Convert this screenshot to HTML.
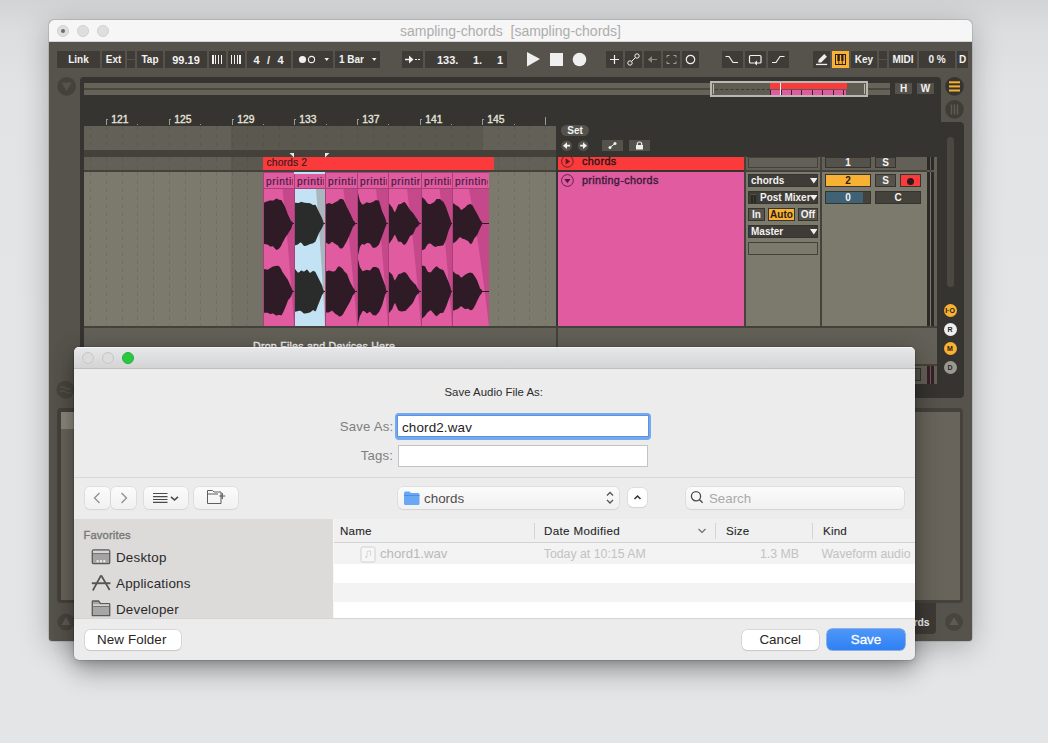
<!DOCTYPE html><html><head><meta charset="utf-8"><style>
*{margin:0;padding:0;box-sizing:border-box}
html,body{width:1048px;height:743px;overflow:hidden}
body{background:linear-gradient(180deg,#d2d3d5 0px,#dcdddf 30px,#e2e3e5 90px,#e4e5e7 400px,#e4e5e7 743px);font-family:"Liberation Sans",sans-serif;position:relative}
.a{position:absolute}
#win{left:49px;top:20px;width:923px;height:621px;border-radius:5px 5px 3px 3px;background:#56534c;box-shadow:0 6px 30px rgba(0,0,0,.26),0 0 0 1px rgba(0,0,0,.10);overflow:hidden}
#tb{left:0;top:0;width:923px;height:22px;background:#f6f6f6;border-bottom:1px solid #d6d6d6}
.tl{width:12px;height:12px;border-radius:50%;background:#dedede;border:1px solid #d0d0d0}
.btn{background:#3f3c37;color:#f2f2f2;font-weight:bold;font-size:10px;text-align:center;line-height:18px;height:17px;top:51px;white-space:nowrap;overflow:hidden}
.sb{background:#3f3c37;color:#f2f2f2;font-weight:bold;font-size:10px;white-space:nowrap;overflow:hidden}
.t{white-space:nowrap}
#dlg{left:74px;top:347px;width:841px;height:313px;background:#ececec;border-radius:5px;box-shadow:0 12px 26px rgba(0,0,0,.30),0 0 24px rgba(0,0,0,.10),0 3px 6px rgba(0,0,0,.10),0 0 0 0.5px rgba(0,0,0,.2);overflow:hidden}
.d{position:absolute;white-space:nowrap;color:#262626;font-size:13px}
</style></head><body>
<div id="win" class="a">
<div id="tb" class="a"><div class="a tl" style="left:8px;top:5px"><div class="a" style="left:3px;top:3px;width:4px;height:4px;border-radius:50%;background:#6b6b6b"></div></div><div class="a tl" style="left:28px;top:5px"></div><div class="a tl" style="left:48px;top:5px"></div><div class="a t" style="left:0;width:923px;top:3px;text-align:center;font-size:14px;color:#adadad">sampling-chords&nbsp; [sampling-chords]</div></div>
<div id="ab" class="a" style="left:-49px;top:-20px;width:1048px;height:743px">
  <!-- toolbar buttons -->
  <div class="a btn" style="left:57px;width:43px">Link</div>
  <div class="a btn" style="left:102px;width:23px">Ext</div>
  <div class="a btn" style="left:127px;width:8px;height:8px"></div>
  <div class="a btn" style="left:127px;width:8px;height:8px;top:60px"></div>
  <div class="a btn" style="left:137px;width:26px">Tap</div>
  <div class="a btn" style="left:165px;width:42px;font-size:11px">99.19</div>
  <div class="a btn" style="left:209px;width:17px"><svg class="a" style="left:0;top:0" width="17" height="17"><rect x="3" y="4" width="2" height="9" fill="#f2f2f2"/><rect x="6" y="4" width="1" height="9" fill="#f2f2f2"/><rect x="9" y="4" width="1" height="9" fill="#f2f2f2"/><rect x="12" y="4" width="1" height="9" fill="#f2f2f2"/></svg></div>
  <div class="a btn" style="left:228px;width:17px"><svg class="a" style="left:0;top:0" width="17" height="17"><rect x="3" y="4" width="1" height="9" fill="#f2f2f2"/><rect x="6" y="4" width="1" height="9" fill="#f2f2f2"/><rect x="9" y="4" width="1" height="9" fill="#f2f2f2"/><rect x="11" y="4" width="2" height="9" fill="#f2f2f2"/></svg></div>
  <div class="a btn" style="left:247px;width:44px;font-size:11px"><span class="a" style="left:6.5px;top:0">4</span><span class="a" style="left:20px;top:0">/</span><span class="a" style="left:30.5px;top:0">4</span></div>
  <div class="a btn" style="left:293px;width:40px"><svg class="a" style="left:0;top:0" width="40" height="17"><circle cx="9.5" cy="8.5" r="3.6" fill="#f0f0f0"/><circle cx="18.5" cy="8.5" r="3.1" fill="none" stroke="#f0f0f0" stroke-width="1.1"/><path d="M31.5 7 L36 7 L33.75 10 Z" fill="#f0f0f0"/></svg></div>
  <div class="a btn" style="left:335px;width:45px;text-align:left;padding-left:4px">1 Bar<svg class="a" style="left:0;top:0" width="45" height="17"><path d="M37 7 L41.5 7 L39.25 10 Z" fill="#f0f0f0"/></svg></div>
  <div class="a btn" style="left:402px;width:21px"><svg class="a" style="left:0;top:0" width="21" height="17"><path d="M3 8.5 H8" stroke="#f0f0f0" stroke-width="1.4"/><path d="M7 4.5 L11.5 8.5 L7 12.5 Z" fill="#f0f0f0"/><rect x="13" y="8" width="2" height="1" fill="#f0f0f0"/><rect x="16" y="8" width="2" height="1" fill="#f0f0f0"/></svg></div>
  <div class="a btn" style="left:425px;width:82px;font-size:11px"><span class="a" style="left:12px;top:0">133.</span><span class="a" style="left:48px;top:0">1.</span><span class="a" style="left:72px;top:0">1</span></div>
  <svg class="a" style="left:520px;top:48px" width="80" height="22"><path d="M7 4 L20 11 L7 18.5 Z" fill="#efefef"/><rect x="30" y="5" width="13" height="13" fill="#efefef"/><circle cx="59.5" cy="11.5" r="6.8" fill="#efefef"/></svg>
  <div class="a btn" style="left:606px;width:17px"><svg class="a" style="left:0;top:0" width="17" height="17"><path d="M8.5 4 V13 M4 8.5 H13" stroke="#f0f0f0" stroke-width="1.2"/></svg></div>
  <div class="a btn" style="left:625px;width:17px"><svg class="a" style="left:0;top:0" width="17" height="17"><circle cx="5" cy="12" r="2.2" fill="none" stroke="#f0f0f0" stroke-width="1"/><circle cx="12" cy="5" r="2.2" fill="none" stroke="#f0f0f0" stroke-width="1"/><path d="M6.5 10.5 L10.5 6.5" stroke="#f0f0f0" stroke-width="1"/></svg></div>
  <div class="a btn" style="left:644px;width:17px"><svg class="a" style="left:0;top:0" width="17" height="17"><path d="M4 8.5 H13" stroke="#8a877c" stroke-width="1.2"/><path d="M8 5 L4 8.5 L8 12 Z" fill="#8a877c"/></svg></div>
  <div class="a btn" style="left:663px;width:17px"><svg class="a" style="left:0;top:0" width="17" height="17"><path d="M4 6.5 V4.5 H6.5 M10.5 4.5 H13 V6.5 M13 10.5 V12.5 H10.5 M6.5 12.5 H4 V10.5" stroke="#a6a396" stroke-width="1" fill="none"/></svg></div>
  <div class="a btn" style="left:682px;width:17px"><svg class="a" style="left:0;top:0" width="17" height="17"><circle cx="8.5" cy="8.5" r="4.2" fill="none" stroke="#f0f0f0" stroke-width="1.2"/></svg></div>
  <div class="a btn" style="left:722px;width:21px"><svg class="a" style="left:0;top:0" width="21" height="17"><path d="M3.5 5.5 H7 L11 11.5 H16" stroke="#f0f0f0" stroke-width="1.2" fill="none"/></svg></div>
  <div class="a btn" style="left:745px;width:21px"><svg class="a" style="left:0;top:0" width="21" height="17"><path d="M9 12 H5.5 Q4.5 12 4.5 11 V5.5 Q4.5 4.5 5.5 4.5 H15 Q16 4.5 16 5.5 V11 Q16 12 15 12 H11" stroke="#f0f0f0" stroke-width="1.2" fill="none"/><path d="M12 9.5 L9 12 L12 14.5 Z" fill="#f0f0f0"/></svg></div>
  <div class="a btn" style="left:768px;width:21px"><svg class="a" style="left:0;top:0" width="21" height="17"><path d="M4 11.5 H8 L12 5.5 H16.5" stroke="#f0f0f0" stroke-width="1.2" fill="none"/></svg></div>
  <div class="a btn" style="left:813px;width:17px"><svg class="a" style="left:0;top:0" width="17" height="17"><path d="M5.2 11.6 L5.6 8.8 L11.3 3.1 L13.9 5.7 L8.2 11.4 Z" fill="#efefef"/><rect x="3" y="12.8" width="11.2" height="1.3" fill="#efefef"/></svg></div>
<div class="a btn" style="left:832px;width:17px;background:#f8b133"><svg class="a" style="left:0;top:0" width="17" height="17"><rect x="3" y="3" width="11" height="11" fill="#2b1d1d"/><rect x="4" y="4" width="1.4" height="7" fill="#f8b133"/><rect x="7.8" y="4" width="1.4" height="7" fill="#f8b133"/><rect x="11.5" y="4" width="1.4" height="7" fill="#f8b133"/><rect x="4" y="10" width="2.4" height="3" fill="#f8b133"/><rect x="7.2" y="10" width="2.6" height="3" fill="#f8b133"/><rect x="10.6" y="10" width="2.4" height="3" fill="#f8b133"/></svg></div>
<div class="a btn" style="left:851px;width:26px">Key</div>
  <div class="a btn" style="left:879px;width:8px;height:8px"></div>
  <div class="a btn" style="left:879px;width:8px;height:8px;top:60px"></div>
  <div class="a btn" style="left:889px;width:28px">MIDI</div>
  <div class="a btn" style="left:919px;width:36px">0 %</div>
  <div class="a btn" style="left:957px;width:11px">D</div>

  <!-- collapsed circle left -->
  <svg class="a" style="left:56px;top:76px" width="22" height="22"><circle cx="10.6" cy="10.4" r="9.3" fill="#45423c"/><path d="M5.5 6.5 H15.7 L10.6 15 Z" fill="#56534c"/></svg>
  <!-- dark panel -->
  <div class="a" style="left:80px;top:77px;width:861px;height:46px;background:#363430;border-radius:4px 4px 0 0"></div>
  <div class="a" style="left:80px;top:122px;width:884px;height:276px;background:#363430;border-radius:0 4px 4px 4px"></div>
  <!-- overview strip -->
  <div class="a" style="left:84px;top:83px;width:806px;height:12px;background:#656258"></div>
  <div class="a" style="left:84px;top:88px;width:806px;height:2px;background:#4a4741"></div>
  <div class="a" style="left:710px;top:81px;width:158px;height:16px;border:2px solid #b9b7b1;background:#5f5c53"></div>
  <div class="a" style="left:715px;top:88.5px;width:55px;height:1px;border-top:1px dashed #3e3b35"></div>
  <div class="a" style="left:770.4px;top:83px;width:77px;height:6px;background:#fa3b3b"></div>
  <div class="a" style="left:770.4px;top:89.5px;width:75.6px;height:5.5px;background:repeating-linear-gradient(90deg,#3a2030 0 1px,#e05ba0 1px 10.5px)"></div>
  <div class="a" style="left:780.4px;top:83px;width:1px;height:12px;background:#f4f4f4"></div>
  <div class="a" style="left:713px;top:84px;width:1px;height:10px;background:#b9b7b1"></div>
  <div class="a" style="left:864px;top:84px;width:1px;height:10px;background:#b9b7b1"></div>
  <div class="a btn" style="left:895px;top:83px;width:17px;height:11px;line-height:11px;background:#55524b">H</div>
  <div class="a btn" style="left:917px;top:83px;width:17px;height:11px;line-height:11px;background:#55524b">W</div>
  <!-- right circles -->
  <svg class="a" style="left:944px;top:76px" width="22" height="44"><circle cx="10.5" cy="10.4" r="9.3" fill="#363430"/><rect x="5" y="5.3" width="11" height="2" fill="#f8b133"/><rect x="5" y="9.4" width="11" height="2" fill="#f8b133"/><rect x="5" y="13.5" width="11" height="2" fill="#f8b133"/><circle cx="10.5" cy="33.4" r="9.3" fill="#403d38"/><rect x="6.8" y="28.5" width="1.4" height="10" fill="#5e5b53"/><rect x="9.8" y="28.5" width="1.4" height="10" fill="#5e5b53"/><rect x="12.8" y="28.5" width="1.4" height="10" fill="#5e5b53"/></svg>
  <!-- ruler -->
  <div id="ruler" class="a" style="left:84px;top:100px;width:472px;height:26px"></div>
  <!-- tracks area -->
  <div class="a" style="left:84px;top:125.5px;width:472px;height:24.5px;background:#636057"></div>
  <div class="a" style="left:84px;top:150px;width:472px;height:7px;background:#44413b"></div>
  <div class="a" style="left:84px;top:157px;width:472px;height:13px;background:#636057"></div>
  <div class="a" style="left:84px;top:170px;width:472px;height:2px;background:#44413b"></div>
  <div class="a" style="left:84px;top:172px;width:472px;height:154px;background:#7c796d"></div>
  <div class="a" style="left:84px;top:326px;width:472px;height:2px;background:#44413b"></div>
  <div class="a" style="left:84px;top:328px;width:472px;height:70px;background:#636057"></div>
  <!-- loop dotted region -->
  <div class="a" style="left:231px;top:125.5px;width:252px;height:24.5px;background:#5b5850"></div>
  <div class="a" style="left:231px;top:157px;width:32px;height:13px;background:#5b5850"></div>
  <div class="a" style="left:231px;top:172px;width:32px;height:154px;background:#747166"></div>
  <div id="grid" class="a" style="left:0;top:0"></div>
  <div class="a" style="left:556px;top:122px;width:2px;height:276px;background:#363430"></div>

<div class="a" style="left:106.0px;top:119px;width:1px;height:6px;background:#9c9990"></div>
<div class="a" style="left:106.0px;top:119px;width:2px;height:1px;background:#9c9990"></div>
<div class="a t" style="left:111.3px;top:114px;font-size:10.3px;color:#e6e4de;-webkit-text-stroke:0.35px #e6e4de;line-height:11px">121</div>
<div class="a" style="left:169.0px;top:119px;width:1px;height:6px;background:#9c9990"></div>
<div class="a" style="left:169.0px;top:119px;width:2px;height:1px;background:#9c9990"></div>
<div class="a t" style="left:174.3px;top:114px;font-size:10.3px;color:#e6e4de;-webkit-text-stroke:0.35px #e6e4de;line-height:11px">125</div>
<div class="a" style="left:232.0px;top:119px;width:1px;height:6px;background:#9c9990"></div>
<div class="a" style="left:232.0px;top:119px;width:2px;height:1px;background:#9c9990"></div>
<div class="a t" style="left:237.3px;top:114px;font-size:10.3px;color:#e6e4de;-webkit-text-stroke:0.35px #e6e4de;line-height:11px">129</div>
<div class="a" style="left:294.0px;top:119px;width:1px;height:6px;background:#9c9990"></div>
<div class="a" style="left:294.0px;top:119px;width:2px;height:1px;background:#9c9990"></div>
<div class="a t" style="left:299.3px;top:114px;font-size:10.3px;color:#e6e4de;-webkit-text-stroke:0.35px #e6e4de;line-height:11px">133</div>
<div class="a" style="left:357.0px;top:119px;width:1px;height:6px;background:#9c9990"></div>
<div class="a" style="left:357.0px;top:119px;width:2px;height:1px;background:#9c9990"></div>
<div class="a t" style="left:362.3px;top:114px;font-size:10.3px;color:#e6e4de;-webkit-text-stroke:0.35px #e6e4de;line-height:11px">137</div>
<div class="a" style="left:420.0px;top:119px;width:1px;height:6px;background:#9c9990"></div>
<div class="a" style="left:420.0px;top:119px;width:2px;height:1px;background:#9c9990"></div>
<div class="a t" style="left:425.3px;top:114px;font-size:10.3px;color:#e6e4de;-webkit-text-stroke:0.35px #e6e4de;line-height:11px">141</div>
<div class="a" style="left:482.0px;top:119px;width:1px;height:6px;background:#9c9990"></div>
<div class="a" style="left:482.0px;top:119px;width:2px;height:1px;background:#9c9990"></div>
<div class="a t" style="left:487.3px;top:114px;font-size:10.3px;color:#e6e4de;-webkit-text-stroke:0.35px #e6e4de;line-height:11px">145</div>
<div class="a" style="left:137.0px;top:123.5px;width:1px;height:1.5px;background:#9c9990"></div>
<div class="a" style="left:200.0px;top:123.5px;width:1px;height:1.5px;background:#9c9990"></div>
<div class="a" style="left:263.0px;top:123.5px;width:1px;height:1.5px;background:#9c9990"></div>
<div class="a" style="left:326.0px;top:123.5px;width:1px;height:1.5px;background:#9c9990"></div>
<div class="a" style="left:388.0px;top:123.5px;width:1px;height:1.5px;background:#9c9990"></div>
<div class="a" style="left:451.0px;top:123.5px;width:1px;height:1.5px;background:#9c9990"></div>
<div class="a" style="left:514.0px;top:123.5px;width:1px;height:1.5px;background:#9c9990"></div>
<div class="a" style="left:545.0px;top:117px;width:1px;height:8px;background:#9c9990"></div>
<div class="a" style="left:90.0px;top:126px;width:1px;height:24px;background:repeating-linear-gradient(180deg,rgba(40,38,34,.13) 0 4px,transparent 4px 8px)"></div>
<div class="a" style="left:90.0px;top:157px;width:1px;height:13px;background:repeating-linear-gradient(180deg,rgba(40,38,34,.13) 0 4px,transparent 4px 8px)"></div>
<div class="a" style="left:90.0px;top:172px;width:1px;height:154px;background:repeating-linear-gradient(180deg,rgba(40,38,34,.13) 0 4px,transparent 4px 8px)"></div>
<div class="a" style="left:90.0px;top:328px;width:1px;height:70px;background:repeating-linear-gradient(180deg,rgba(40,38,34,.13) 0 4px,transparent 4px 8px)"></div>
<div class="a" style="left:106.0px;top:126px;width:1px;height:24px;background:repeating-linear-gradient(180deg,rgba(40,38,34,.13) 0 4px,transparent 4px 8px)"></div>
<div class="a" style="left:106.0px;top:157px;width:1px;height:13px;background:repeating-linear-gradient(180deg,rgba(40,38,34,.13) 0 4px,transparent 4px 8px)"></div>
<div class="a" style="left:106.0px;top:172px;width:1px;height:154px;background:repeating-linear-gradient(180deg,rgba(40,38,34,.13) 0 4px,transparent 4px 8px)"></div>
<div class="a" style="left:106.0px;top:328px;width:1px;height:70px;background:repeating-linear-gradient(180deg,rgba(40,38,34,.13) 0 4px,transparent 4px 8px)"></div>
<div class="a" style="left:122.0px;top:126px;width:1px;height:24px;background:repeating-linear-gradient(180deg,rgba(40,38,34,.13) 0 4px,transparent 4px 8px)"></div>
<div class="a" style="left:122.0px;top:157px;width:1px;height:13px;background:repeating-linear-gradient(180deg,rgba(40,38,34,.13) 0 4px,transparent 4px 8px)"></div>
<div class="a" style="left:122.0px;top:172px;width:1px;height:154px;background:repeating-linear-gradient(180deg,rgba(40,38,34,.13) 0 4px,transparent 4px 8px)"></div>
<div class="a" style="left:122.0px;top:328px;width:1px;height:70px;background:repeating-linear-gradient(180deg,rgba(40,38,34,.13) 0 4px,transparent 4px 8px)"></div>
<div class="a" style="left:137.0px;top:126px;width:1px;height:24px;background:repeating-linear-gradient(180deg,rgba(40,38,34,.13) 0 4px,transparent 4px 8px)"></div>
<div class="a" style="left:137.0px;top:157px;width:1px;height:13px;background:repeating-linear-gradient(180deg,rgba(40,38,34,.13) 0 4px,transparent 4px 8px)"></div>
<div class="a" style="left:137.0px;top:172px;width:1px;height:154px;background:repeating-linear-gradient(180deg,rgba(40,38,34,.13) 0 4px,transparent 4px 8px)"></div>
<div class="a" style="left:137.0px;top:328px;width:1px;height:70px;background:repeating-linear-gradient(180deg,rgba(40,38,34,.13) 0 4px,transparent 4px 8px)"></div>
<div class="a" style="left:153.0px;top:126px;width:1px;height:24px;background:repeating-linear-gradient(180deg,rgba(40,38,34,.13) 0 4px,transparent 4px 8px)"></div>
<div class="a" style="left:153.0px;top:157px;width:1px;height:13px;background:repeating-linear-gradient(180deg,rgba(40,38,34,.13) 0 4px,transparent 4px 8px)"></div>
<div class="a" style="left:153.0px;top:172px;width:1px;height:154px;background:repeating-linear-gradient(180deg,rgba(40,38,34,.13) 0 4px,transparent 4px 8px)"></div>
<div class="a" style="left:153.0px;top:328px;width:1px;height:70px;background:repeating-linear-gradient(180deg,rgba(40,38,34,.13) 0 4px,transparent 4px 8px)"></div>
<div class="a" style="left:169.0px;top:126px;width:1px;height:24px;background:repeating-linear-gradient(180deg,rgba(40,38,34,.13) 0 4px,transparent 4px 8px)"></div>
<div class="a" style="left:169.0px;top:157px;width:1px;height:13px;background:repeating-linear-gradient(180deg,rgba(40,38,34,.13) 0 4px,transparent 4px 8px)"></div>
<div class="a" style="left:169.0px;top:172px;width:1px;height:154px;background:repeating-linear-gradient(180deg,rgba(40,38,34,.13) 0 4px,transparent 4px 8px)"></div>
<div class="a" style="left:169.0px;top:328px;width:1px;height:70px;background:repeating-linear-gradient(180deg,rgba(40,38,34,.13) 0 4px,transparent 4px 8px)"></div>
<div class="a" style="left:185.0px;top:126px;width:1px;height:24px;background:repeating-linear-gradient(180deg,rgba(40,38,34,.13) 0 4px,transparent 4px 8px)"></div>
<div class="a" style="left:185.0px;top:157px;width:1px;height:13px;background:repeating-linear-gradient(180deg,rgba(40,38,34,.13) 0 4px,transparent 4px 8px)"></div>
<div class="a" style="left:185.0px;top:172px;width:1px;height:154px;background:repeating-linear-gradient(180deg,rgba(40,38,34,.13) 0 4px,transparent 4px 8px)"></div>
<div class="a" style="left:185.0px;top:328px;width:1px;height:70px;background:repeating-linear-gradient(180deg,rgba(40,38,34,.13) 0 4px,transparent 4px 8px)"></div>
<div class="a" style="left:200.0px;top:126px;width:1px;height:24px;background:repeating-linear-gradient(180deg,rgba(40,38,34,.13) 0 4px,transparent 4px 8px)"></div>
<div class="a" style="left:200.0px;top:157px;width:1px;height:13px;background:repeating-linear-gradient(180deg,rgba(40,38,34,.13) 0 4px,transparent 4px 8px)"></div>
<div class="a" style="left:200.0px;top:172px;width:1px;height:154px;background:repeating-linear-gradient(180deg,rgba(40,38,34,.13) 0 4px,transparent 4px 8px)"></div>
<div class="a" style="left:200.0px;top:328px;width:1px;height:70px;background:repeating-linear-gradient(180deg,rgba(40,38,34,.13) 0 4px,transparent 4px 8px)"></div>
<div class="a" style="left:216.0px;top:126px;width:1px;height:24px;background:repeating-linear-gradient(180deg,rgba(40,38,34,.13) 0 4px,transparent 4px 8px)"></div>
<div class="a" style="left:216.0px;top:157px;width:1px;height:13px;background:repeating-linear-gradient(180deg,rgba(40,38,34,.13) 0 4px,transparent 4px 8px)"></div>
<div class="a" style="left:216.0px;top:172px;width:1px;height:154px;background:repeating-linear-gradient(180deg,rgba(40,38,34,.13) 0 4px,transparent 4px 8px)"></div>
<div class="a" style="left:216.0px;top:328px;width:1px;height:70px;background:repeating-linear-gradient(180deg,rgba(40,38,34,.13) 0 4px,transparent 4px 8px)"></div>
<div class="a" style="left:232.0px;top:126px;width:1px;height:24px;background:repeating-linear-gradient(180deg,rgba(40,38,34,.13) 0 4px,transparent 4px 8px)"></div>
<div class="a" style="left:232.0px;top:157px;width:1px;height:13px;background:repeating-linear-gradient(180deg,rgba(40,38,34,.13) 0 4px,transparent 4px 8px)"></div>
<div class="a" style="left:232.0px;top:172px;width:1px;height:154px;background:repeating-linear-gradient(180deg,rgba(40,38,34,.13) 0 4px,transparent 4px 8px)"></div>
<div class="a" style="left:232.0px;top:328px;width:1px;height:70px;background:repeating-linear-gradient(180deg,rgba(40,38,34,.13) 0 4px,transparent 4px 8px)"></div>
<div class="a" style="left:247.0px;top:126px;width:1px;height:24px;background:repeating-linear-gradient(180deg,rgba(40,38,34,.13) 0 4px,transparent 4px 8px)"></div>
<div class="a" style="left:247.0px;top:157px;width:1px;height:13px;background:repeating-linear-gradient(180deg,rgba(40,38,34,.13) 0 4px,transparent 4px 8px)"></div>
<div class="a" style="left:247.0px;top:172px;width:1px;height:154px;background:repeating-linear-gradient(180deg,rgba(40,38,34,.13) 0 4px,transparent 4px 8px)"></div>
<div class="a" style="left:247.0px;top:328px;width:1px;height:70px;background:repeating-linear-gradient(180deg,rgba(40,38,34,.13) 0 4px,transparent 4px 8px)"></div>
<div class="a" style="left:263.0px;top:126px;width:1px;height:24px;background:repeating-linear-gradient(180deg,rgba(40,38,34,.13) 0 4px,transparent 4px 8px)"></div>
<div class="a" style="left:263.0px;top:157px;width:1px;height:13px;background:repeating-linear-gradient(180deg,rgba(40,38,34,.13) 0 4px,transparent 4px 8px)"></div>
<div class="a" style="left:263.0px;top:172px;width:1px;height:154px;background:repeating-linear-gradient(180deg,rgba(40,38,34,.13) 0 4px,transparent 4px 8px)"></div>
<div class="a" style="left:263.0px;top:328px;width:1px;height:70px;background:repeating-linear-gradient(180deg,rgba(40,38,34,.13) 0 4px,transparent 4px 8px)"></div>
<div class="a" style="left:279.0px;top:126px;width:1px;height:24px;background:repeating-linear-gradient(180deg,rgba(40,38,34,.13) 0 4px,transparent 4px 8px)"></div>
<div class="a" style="left:279.0px;top:157px;width:1px;height:13px;background:repeating-linear-gradient(180deg,rgba(40,38,34,.13) 0 4px,transparent 4px 8px)"></div>
<div class="a" style="left:279.0px;top:172px;width:1px;height:154px;background:repeating-linear-gradient(180deg,rgba(40,38,34,.13) 0 4px,transparent 4px 8px)"></div>
<div class="a" style="left:279.0px;top:328px;width:1px;height:70px;background:repeating-linear-gradient(180deg,rgba(40,38,34,.13) 0 4px,transparent 4px 8px)"></div>
<div class="a" style="left:294.0px;top:126px;width:1px;height:24px;background:repeating-linear-gradient(180deg,rgba(40,38,34,.13) 0 4px,transparent 4px 8px)"></div>
<div class="a" style="left:294.0px;top:157px;width:1px;height:13px;background:repeating-linear-gradient(180deg,rgba(40,38,34,.13) 0 4px,transparent 4px 8px)"></div>
<div class="a" style="left:294.0px;top:172px;width:1px;height:154px;background:repeating-linear-gradient(180deg,rgba(40,38,34,.13) 0 4px,transparent 4px 8px)"></div>
<div class="a" style="left:294.0px;top:328px;width:1px;height:70px;background:repeating-linear-gradient(180deg,rgba(40,38,34,.13) 0 4px,transparent 4px 8px)"></div>
<div class="a" style="left:310.0px;top:126px;width:1px;height:24px;background:repeating-linear-gradient(180deg,rgba(40,38,34,.13) 0 4px,transparent 4px 8px)"></div>
<div class="a" style="left:310.0px;top:157px;width:1px;height:13px;background:repeating-linear-gradient(180deg,rgba(40,38,34,.13) 0 4px,transparent 4px 8px)"></div>
<div class="a" style="left:310.0px;top:172px;width:1px;height:154px;background:repeating-linear-gradient(180deg,rgba(40,38,34,.13) 0 4px,transparent 4px 8px)"></div>
<div class="a" style="left:310.0px;top:328px;width:1px;height:70px;background:repeating-linear-gradient(180deg,rgba(40,38,34,.13) 0 4px,transparent 4px 8px)"></div>
<div class="a" style="left:326.0px;top:126px;width:1px;height:24px;background:repeating-linear-gradient(180deg,rgba(40,38,34,.13) 0 4px,transparent 4px 8px)"></div>
<div class="a" style="left:326.0px;top:157px;width:1px;height:13px;background:repeating-linear-gradient(180deg,rgba(40,38,34,.13) 0 4px,transparent 4px 8px)"></div>
<div class="a" style="left:326.0px;top:172px;width:1px;height:154px;background:repeating-linear-gradient(180deg,rgba(40,38,34,.13) 0 4px,transparent 4px 8px)"></div>
<div class="a" style="left:326.0px;top:328px;width:1px;height:70px;background:repeating-linear-gradient(180deg,rgba(40,38,34,.13) 0 4px,transparent 4px 8px)"></div>
<div class="a" style="left:341.0px;top:126px;width:1px;height:24px;background:repeating-linear-gradient(180deg,rgba(40,38,34,.13) 0 4px,transparent 4px 8px)"></div>
<div class="a" style="left:341.0px;top:157px;width:1px;height:13px;background:repeating-linear-gradient(180deg,rgba(40,38,34,.13) 0 4px,transparent 4px 8px)"></div>
<div class="a" style="left:341.0px;top:172px;width:1px;height:154px;background:repeating-linear-gradient(180deg,rgba(40,38,34,.13) 0 4px,transparent 4px 8px)"></div>
<div class="a" style="left:341.0px;top:328px;width:1px;height:70px;background:repeating-linear-gradient(180deg,rgba(40,38,34,.13) 0 4px,transparent 4px 8px)"></div>
<div class="a" style="left:357.0px;top:126px;width:1px;height:24px;background:repeating-linear-gradient(180deg,rgba(40,38,34,.13) 0 4px,transparent 4px 8px)"></div>
<div class="a" style="left:357.0px;top:157px;width:1px;height:13px;background:repeating-linear-gradient(180deg,rgba(40,38,34,.13) 0 4px,transparent 4px 8px)"></div>
<div class="a" style="left:357.0px;top:172px;width:1px;height:154px;background:repeating-linear-gradient(180deg,rgba(40,38,34,.13) 0 4px,transparent 4px 8px)"></div>
<div class="a" style="left:357.0px;top:328px;width:1px;height:70px;background:repeating-linear-gradient(180deg,rgba(40,38,34,.13) 0 4px,transparent 4px 8px)"></div>
<div class="a" style="left:373.0px;top:126px;width:1px;height:24px;background:repeating-linear-gradient(180deg,rgba(40,38,34,.13) 0 4px,transparent 4px 8px)"></div>
<div class="a" style="left:373.0px;top:157px;width:1px;height:13px;background:repeating-linear-gradient(180deg,rgba(40,38,34,.13) 0 4px,transparent 4px 8px)"></div>
<div class="a" style="left:373.0px;top:172px;width:1px;height:154px;background:repeating-linear-gradient(180deg,rgba(40,38,34,.13) 0 4px,transparent 4px 8px)"></div>
<div class="a" style="left:373.0px;top:328px;width:1px;height:70px;background:repeating-linear-gradient(180deg,rgba(40,38,34,.13) 0 4px,transparent 4px 8px)"></div>
<div class="a" style="left:388.0px;top:126px;width:1px;height:24px;background:repeating-linear-gradient(180deg,rgba(40,38,34,.13) 0 4px,transparent 4px 8px)"></div>
<div class="a" style="left:388.0px;top:157px;width:1px;height:13px;background:repeating-linear-gradient(180deg,rgba(40,38,34,.13) 0 4px,transparent 4px 8px)"></div>
<div class="a" style="left:388.0px;top:172px;width:1px;height:154px;background:repeating-linear-gradient(180deg,rgba(40,38,34,.13) 0 4px,transparent 4px 8px)"></div>
<div class="a" style="left:388.0px;top:328px;width:1px;height:70px;background:repeating-linear-gradient(180deg,rgba(40,38,34,.13) 0 4px,transparent 4px 8px)"></div>
<div class="a" style="left:404.0px;top:126px;width:1px;height:24px;background:repeating-linear-gradient(180deg,rgba(40,38,34,.13) 0 4px,transparent 4px 8px)"></div>
<div class="a" style="left:404.0px;top:157px;width:1px;height:13px;background:repeating-linear-gradient(180deg,rgba(40,38,34,.13) 0 4px,transparent 4px 8px)"></div>
<div class="a" style="left:404.0px;top:172px;width:1px;height:154px;background:repeating-linear-gradient(180deg,rgba(40,38,34,.13) 0 4px,transparent 4px 8px)"></div>
<div class="a" style="left:404.0px;top:328px;width:1px;height:70px;background:repeating-linear-gradient(180deg,rgba(40,38,34,.13) 0 4px,transparent 4px 8px)"></div>
<div class="a" style="left:420.0px;top:126px;width:1px;height:24px;background:repeating-linear-gradient(180deg,rgba(40,38,34,.13) 0 4px,transparent 4px 8px)"></div>
<div class="a" style="left:420.0px;top:157px;width:1px;height:13px;background:repeating-linear-gradient(180deg,rgba(40,38,34,.13) 0 4px,transparent 4px 8px)"></div>
<div class="a" style="left:420.0px;top:172px;width:1px;height:154px;background:repeating-linear-gradient(180deg,rgba(40,38,34,.13) 0 4px,transparent 4px 8px)"></div>
<div class="a" style="left:420.0px;top:328px;width:1px;height:70px;background:repeating-linear-gradient(180deg,rgba(40,38,34,.13) 0 4px,transparent 4px 8px)"></div>
<div class="a" style="left:435.0px;top:126px;width:1px;height:24px;background:repeating-linear-gradient(180deg,rgba(40,38,34,.13) 0 4px,transparent 4px 8px)"></div>
<div class="a" style="left:435.0px;top:157px;width:1px;height:13px;background:repeating-linear-gradient(180deg,rgba(40,38,34,.13) 0 4px,transparent 4px 8px)"></div>
<div class="a" style="left:435.0px;top:172px;width:1px;height:154px;background:repeating-linear-gradient(180deg,rgba(40,38,34,.13) 0 4px,transparent 4px 8px)"></div>
<div class="a" style="left:435.0px;top:328px;width:1px;height:70px;background:repeating-linear-gradient(180deg,rgba(40,38,34,.13) 0 4px,transparent 4px 8px)"></div>
<div class="a" style="left:451.0px;top:126px;width:1px;height:24px;background:repeating-linear-gradient(180deg,rgba(40,38,34,.13) 0 4px,transparent 4px 8px)"></div>
<div class="a" style="left:451.0px;top:157px;width:1px;height:13px;background:repeating-linear-gradient(180deg,rgba(40,38,34,.13) 0 4px,transparent 4px 8px)"></div>
<div class="a" style="left:451.0px;top:172px;width:1px;height:154px;background:repeating-linear-gradient(180deg,rgba(40,38,34,.13) 0 4px,transparent 4px 8px)"></div>
<div class="a" style="left:451.0px;top:328px;width:1px;height:70px;background:repeating-linear-gradient(180deg,rgba(40,38,34,.13) 0 4px,transparent 4px 8px)"></div>
<div class="a" style="left:467.0px;top:126px;width:1px;height:24px;background:repeating-linear-gradient(180deg,rgba(40,38,34,.13) 0 4px,transparent 4px 8px)"></div>
<div class="a" style="left:467.0px;top:157px;width:1px;height:13px;background:repeating-linear-gradient(180deg,rgba(40,38,34,.13) 0 4px,transparent 4px 8px)"></div>
<div class="a" style="left:467.0px;top:172px;width:1px;height:154px;background:repeating-linear-gradient(180deg,rgba(40,38,34,.13) 0 4px,transparent 4px 8px)"></div>
<div class="a" style="left:467.0px;top:328px;width:1px;height:70px;background:repeating-linear-gradient(180deg,rgba(40,38,34,.13) 0 4px,transparent 4px 8px)"></div>
<div class="a" style="left:482.0px;top:126px;width:1px;height:24px;background:repeating-linear-gradient(180deg,rgba(40,38,34,.13) 0 4px,transparent 4px 8px)"></div>
<div class="a" style="left:482.0px;top:157px;width:1px;height:13px;background:repeating-linear-gradient(180deg,rgba(40,38,34,.13) 0 4px,transparent 4px 8px)"></div>
<div class="a" style="left:482.0px;top:172px;width:1px;height:154px;background:repeating-linear-gradient(180deg,rgba(40,38,34,.13) 0 4px,transparent 4px 8px)"></div>
<div class="a" style="left:482.0px;top:328px;width:1px;height:70px;background:repeating-linear-gradient(180deg,rgba(40,38,34,.13) 0 4px,transparent 4px 8px)"></div>
<div class="a" style="left:498.0px;top:126px;width:1px;height:24px;background:repeating-linear-gradient(180deg,rgba(40,38,34,.13) 0 4px,transparent 4px 8px)"></div>
<div class="a" style="left:498.0px;top:157px;width:1px;height:13px;background:repeating-linear-gradient(180deg,rgba(40,38,34,.13) 0 4px,transparent 4px 8px)"></div>
<div class="a" style="left:498.0px;top:172px;width:1px;height:154px;background:repeating-linear-gradient(180deg,rgba(40,38,34,.13) 0 4px,transparent 4px 8px)"></div>
<div class="a" style="left:498.0px;top:328px;width:1px;height:70px;background:repeating-linear-gradient(180deg,rgba(40,38,34,.13) 0 4px,transparent 4px 8px)"></div>
<div class="a" style="left:514.0px;top:126px;width:1px;height:24px;background:repeating-linear-gradient(180deg,rgba(40,38,34,.13) 0 4px,transparent 4px 8px)"></div>
<div class="a" style="left:514.0px;top:157px;width:1px;height:13px;background:repeating-linear-gradient(180deg,rgba(40,38,34,.13) 0 4px,transparent 4px 8px)"></div>
<div class="a" style="left:514.0px;top:172px;width:1px;height:154px;background:repeating-linear-gradient(180deg,rgba(40,38,34,.13) 0 4px,transparent 4px 8px)"></div>
<div class="a" style="left:514.0px;top:328px;width:1px;height:70px;background:repeating-linear-gradient(180deg,rgba(40,38,34,.13) 0 4px,transparent 4px 8px)"></div>
<div class="a" style="left:529.0px;top:126px;width:1px;height:24px;background:repeating-linear-gradient(180deg,rgba(40,38,34,.13) 0 4px,transparent 4px 8px)"></div>
<div class="a" style="left:529.0px;top:157px;width:1px;height:13px;background:repeating-linear-gradient(180deg,rgba(40,38,34,.13) 0 4px,transparent 4px 8px)"></div>
<div class="a" style="left:529.0px;top:172px;width:1px;height:154px;background:repeating-linear-gradient(180deg,rgba(40,38,34,.13) 0 4px,transparent 4px 8px)"></div>
<div class="a" style="left:529.0px;top:328px;width:1px;height:70px;background:repeating-linear-gradient(180deg,rgba(40,38,34,.13) 0 4px,transparent 4px 8px)"></div>
<div class="a" style="left:545.0px;top:126px;width:1px;height:24px;background:repeating-linear-gradient(180deg,rgba(40,38,34,.13) 0 4px,transparent 4px 8px)"></div>
<div class="a" style="left:545.0px;top:157px;width:1px;height:13px;background:repeating-linear-gradient(180deg,rgba(40,38,34,.13) 0 4px,transparent 4px 8px)"></div>
<div class="a" style="left:545.0px;top:172px;width:1px;height:154px;background:repeating-linear-gradient(180deg,rgba(40,38,34,.13) 0 4px,transparent 4px 8px)"></div>
<div class="a" style="left:545.0px;top:328px;width:1px;height:70px;background:repeating-linear-gradient(180deg,rgba(40,38,34,.13) 0 4px,transparent 4px 8px)"></div>
<div class="a" style="left:263px;top:157px;width:231px;height:13px;background:#fb3b3b"></div>
<div class="a t" style="left:266.5px;top:157px;font-size:10.4px;line-height:12px;color:#3a1a22;-webkit-text-stroke:0.15px #3a1a22;letter-spacing:0.1px">chords 2</div>
<svg class="a" style="left:289px;top:152.5px" width="6" height="6"><path d="M0.5 0 H5 V4.5 Z" fill="#dcecf4"/></svg>
<svg class="a" style="left:325px;top:152.5px" width="6" height="6"><path d="M0 0 H4.5 L0 4.5 Z" fill="#dcecf4"/></svg>
<div class="a" style="left:263px;top:172px;width:31px;height:154px;background:#e05ba0;border-left:1px solid #a8407a;"></div>
<div class="a" style="left:263px;top:172px;width:31px;height:17px;background:#e05ba0;border:1px solid #a8407a;border-right:none"></div>
<div class="a t" style="left:266px;top:175px;width:27px;overflow:hidden;font-size:10.1px;line-height:13px;color:#40203f;-webkit-text-stroke:0.2px #40203f;letter-spacing:0.65px">printing-chords</div>
<svg class="a" style="left:263px;top:189px" width="31" height="137"><path d="M19.5 0 Q25.825 60 31 137 V0 Z" fill="#c4488a"/></svg>
<div class="a" style="left:294px;top:172px;width:31px;height:154px;background:#c3e2f3;border-left:1px solid #a8407a;"></div>
<div class="a" style="left:294px;top:172px;width:31px;height:17px;background:#e05ba0;border:1px solid #a8407a;border-right:none"></div>
<div class="a" style="left:294px;top:172px;width:31px;height:1.5px;background:#c3e2f3"></div>
<div class="a t" style="left:297px;top:175px;width:27px;overflow:hidden;font-size:10.1px;line-height:13px;color:#40203f;-webkit-text-stroke:0.2px #40203f;letter-spacing:0.65px">printing-chords</div>
<svg class="a" style="left:294px;top:189px" width="31" height="137"><path d="M22 0 Q26.95 60 31 137 V0 Z" fill="#a9b6be"/></svg>
<div class="a" style="left:325px;top:172px;width:32px;height:154px;background:#e05ba0;border-left:1px solid #a8407a;"></div>
<div class="a" style="left:325px;top:172px;width:32px;height:17px;background:#e05ba0;border:1px solid #a8407a;border-right:none"></div>
<div class="a t" style="left:328px;top:175px;width:28px;overflow:hidden;font-size:10.1px;line-height:13px;color:#40203f;-webkit-text-stroke:0.2px #40203f;letter-spacing:0.65px">printing-chords</div>
<svg class="a" style="left:325px;top:189px" width="32" height="137"><path d="M18.4 0 Q25.88 60 32 137 V0 Z" fill="#c4488a"/></svg>
<div class="a" style="left:357px;top:172px;width:31px;height:154px;background:#e05ba0;border-left:1px solid #a8407a;"></div>
<div class="a" style="left:357px;top:172px;width:31px;height:17px;background:#e05ba0;border:1px solid #a8407a;border-right:none"></div>
<div class="a t" style="left:360px;top:175px;width:27px;overflow:hidden;font-size:10.1px;line-height:13px;color:#40203f;-webkit-text-stroke:0.2px #40203f;letter-spacing:0.65px">printing-chords</div>
<svg class="a" style="left:357px;top:189px" width="31" height="137"><path d="M19 0 Q25.6 60 31 137 V0 Z" fill="#c4488a"/></svg>
<div class="a" style="left:388px;top:172px;width:33px;height:154px;background:#e05ba0;border-left:1px solid #a8407a;"></div>
<div class="a" style="left:388px;top:172px;width:33px;height:17px;background:#e05ba0;border:1px solid #a8407a;border-right:none"></div>
<div class="a t" style="left:391px;top:175px;width:29px;overflow:hidden;font-size:10.1px;line-height:13px;color:#40203f;-webkit-text-stroke:0.2px #40203f;letter-spacing:0.65px">printing-chords</div>
<svg class="a" style="left:388px;top:189px" width="33" height="137"><path d="M19 0 Q26.7 60 33 137 V0 Z" fill="#c4488a"/></svg>
<div class="a" style="left:421px;top:172px;width:31px;height:154px;background:#e05ba0;border-left:1px solid #a8407a;"></div>
<div class="a" style="left:421px;top:172px;width:31px;height:17px;background:#e05ba0;border:1px solid #a8407a;border-right:none"></div>
<div class="a t" style="left:424px;top:175px;width:27px;overflow:hidden;font-size:10.1px;line-height:13px;color:#40203f;-webkit-text-stroke:0.2px #40203f;letter-spacing:0.65px">printing-chords</div>
<svg class="a" style="left:421px;top:189px" width="31" height="137"><path d="M18.6 0 Q25.42 60 31 137 V0 Z" fill="#c4488a"/></svg>
<div class="a" style="left:452px;top:172px;width:37px;height:154px;background:#e05ba0;border-left:1px solid #a8407a;"></div>
<div class="a" style="left:452px;top:172px;width:37px;height:17px;background:#e05ba0;border:1px solid #a8407a;border-right:none"></div>
<div class="a t" style="left:455px;top:175px;width:33px;overflow:hidden;font-size:10.1px;line-height:13px;color:#40203f;-webkit-text-stroke:0.2px #40203f;letter-spacing:0.65px">printing-chords</div>
<svg class="a" style="left:452px;top:189px" width="37" height="137"><path d="M17 0 Q28.0 60 37 137 V0 Z" fill="#c4488a"/></svg>
<svg class="a" style="left:264px;top:189px" width="30" height="137"><path d="M0.0 13.7 L0.5 13.4 L1.0 13.2 L1.5 12.9 L2.0 12.7 L2.5 12.5 L3.0 12.2 L3.5 12.4 L4.0 12.3 L4.5 12.1 L5.0 11.8 L5.5 11.6 L6.0 11.4 L6.5 11.4 L7.0 11.5 L7.5 11.5 L8.0 11.5 L8.5 11.6 L9.0 11.7 L9.5 11.4 L10.0 11.0 L10.5 10.7 L11.0 10.4 L11.5 10.1 L12.0 9.7 L12.5 9.6 L13.0 9.7 L13.5 10.0 L14.0 10.2 L14.5 10.4 L15.0 10.7 L15.5 10.8 L16.0 10.9 L16.5 11.0 L17.0 11.1 L17.5 11.3 L18.0 12.2 L18.5 13.1 L19.0 14.0 L19.5 14.9 L20.0 15.8 L20.5 16.7 L21.0 17.7 L21.5 19.0 L22.0 20.4 L22.5 21.7 L23.0 23.1 L23.5 24.4 L24.0 25.8 L24.5 26.8 L25.0 27.8 L25.5 28.8 L26.0 29.8 L26.5 30.9 L27.0 31.9 L27.5 32.4 L28.0 32.3 L28.5 33.3 L29.0 34.3 L29.5 34.5 L30.0 34.5 L30.0 34.5 L29.5 34.5 L29.0 34.7 L28.5 35.7 L28.0 36.7 L27.5 38.8 L27.0 40.0 L26.5 40.8 L26.0 41.6 L25.5 42.3 L25.0 43.1 L24.5 43.9 L24.0 44.7 L23.5 45.4 L23.0 46.1 L22.5 46.8 L22.0 47.5 L21.5 48.2 L21.0 48.9 L20.5 49.9 L20.0 50.9 L19.5 51.9 L19.0 52.8 L18.5 53.8 L18.0 54.8 L17.5 56.3 L17.0 57.1 L16.5 57.8 L16.0 58.4 L15.5 59.1 L15.0 59.8 L14.5 60.0 L14.0 60.2 L13.5 60.5 L13.0 60.7 L12.5 60.9 L12.0 60.7 L11.5 60.1 L11.0 59.5 L10.5 59.0 L10.0 58.4 L9.5 57.8 L9.0 57.2 L8.5 57.3 L8.0 57.4 L7.5 57.4 L7.0 57.4 L6.5 57.4 L6.0 57.4 L5.5 57.0 L5.0 56.6 L4.5 56.2 L4.0 55.8 L3.5 55.5 L3.0 55.5 L2.5 55.4 L2.0 55.3 L1.5 55.2 L1.0 55.1 L0.5 55.0 L0.0 54.9 Z" fill="#2e1b25"/><path d="M0.0 80.1 L0.5 80.2 L1.0 80.3 L1.5 80.3 L2.0 80.4 L2.5 80.5 L3.0 80.6 L3.5 80.7 L4.0 80.5 L4.5 80.2 L5.0 79.9 L5.5 79.6 L6.0 79.3 L6.5 79.0 L7.0 78.7 L7.5 78.3 L8.0 78.0 L8.5 77.8 L9.0 77.5 L9.5 77.4 L10.0 77.3 L10.5 77.2 L11.0 77.1 L11.5 77.1 L12.0 77.0 L12.5 76.7 L13.0 76.7 L13.5 76.8 L14.0 76.9 L14.5 77.0 L15.0 77.1 L15.5 77.8 L16.0 78.5 L16.5 79.2 L17.0 79.9 L17.5 80.7 L18.0 82.2 L18.5 82.9 L19.0 83.7 L19.5 84.4 L20.0 85.2 L20.5 85.9 L21.0 86.7 L21.5 87.4 L22.0 88.1 L22.5 88.9 L23.0 89.6 L23.5 90.3 L24.0 91.1 L24.5 92.2 L25.0 93.3 L25.5 94.5 L26.0 95.6 L26.5 96.8 L27.0 97.9 L27.5 98.7 L28.0 100.3 L28.5 101.3 L29.0 102.3 L29.5 102.5 L30.0 102.5 L30.0 102.5 L29.5 102.5 L29.0 102.7 L28.5 103.7 L28.0 104.7 L27.5 106.2 L27.0 107.6 L26.5 108.2 L26.0 108.9 L25.5 109.5 L25.0 110.2 L24.5 110.8 L24.0 111.4 L23.5 112.7 L23.0 114.0 L22.5 115.4 L22.0 116.7 L21.5 118.0 L21.0 119.3 L20.5 120.3 L20.0 121.4 L19.5 122.5 L19.0 123.5 L18.5 124.6 L18.0 125.7 L17.5 126.3 L17.0 126.3 L16.5 126.2 L16.0 126.1 L15.5 125.9 L15.0 125.8 L14.5 126.0 L14.0 126.1 L13.5 126.3 L13.0 126.5 L12.5 126.6 L12.0 126.4 L11.5 126.1 L11.0 125.7 L10.5 125.4 L10.0 125.1 L9.5 124.8 L9.0 124.5 L8.5 124.6 L8.0 124.7 L7.5 124.8 L7.0 124.9 L6.5 124.9 L6.0 125.0 L5.5 124.7 L5.0 124.4 L4.5 124.1 L4.0 123.9 L3.5 123.7 L3.0 123.8 L2.5 123.8 L2.0 123.8 L1.5 123.7 L1.0 123.7 L0.5 123.7 L0.0 123.7 Z" fill="#2e1b25"/><rect x="0" y="34" width="30" height="1" fill="#2e1b25"/><rect x="0" y="102" width="30" height="1" fill="#2e1b25"/></svg>
<svg class="a" style="left:295px;top:189px" width="30" height="137"><path d="M0.0 13.7 L0.5 13.7 L1.0 13.8 L1.5 13.8 L2.0 13.9 L2.5 13.9 L3.0 14.0 L3.5 13.9 L4.0 13.8 L4.5 13.7 L5.0 13.4 L5.5 13.1 L6.0 12.8 L6.5 12.9 L7.0 13.1 L7.5 13.2 L8.0 13.3 L8.5 13.5 L9.0 13.6 L9.5 13.7 L10.0 13.7 L10.5 13.8 L11.0 13.9 L11.5 13.9 L12.0 14.0 L12.5 14.0 L13.0 14.1 L13.5 14.1 L14.0 14.1 L14.5 14.2 L15.0 14.2 L15.5 14.5 L16.0 14.8 L16.5 15.1 L17.0 15.4 L17.5 15.8 L18.0 16.1 L18.5 16.0 L19.0 15.9 L19.5 15.8 L20.0 15.7 L20.5 15.9 L21.0 16.8 L21.5 17.8 L22.0 18.8 L22.5 19.9 L23.0 20.9 L23.5 21.9 L24.0 22.9 L24.5 24.0 L25.0 25.0 L25.5 26.0 L26.0 27.0 L26.5 28.0 L27.0 29.0 L27.5 30.4 L28.0 32.1 L28.5 33.2 L29.0 34.3 L29.5 34.5 L30.0 34.5 L30.0 34.5 L29.5 34.5 L29.0 34.7 L28.5 35.8 L28.0 36.9 L27.5 37.8 L27.0 39.2 L26.5 40.0 L26.0 40.8 L25.5 41.6 L25.0 42.4 L24.5 43.3 L24.0 44.1 L23.5 45.3 L23.0 46.4 L22.5 47.6 L22.0 48.8 L21.5 49.9 L21.0 51.1 L20.5 52.4 L20.0 53.0 L19.5 53.3 L19.0 53.6 L18.5 54.0 L18.0 54.3 L17.5 54.4 L17.0 54.5 L16.5 54.7 L16.0 54.8 L15.5 54.9 L15.0 55.0 L14.5 55.2 L14.0 55.5 L13.5 55.7 L13.0 56.0 L12.5 56.2 L12.0 56.5 L11.5 56.6 L11.0 56.7 L10.5 56.8 L10.0 56.9 L9.5 57.0 L9.0 57.0 L8.5 56.4 L8.0 55.8 L7.5 55.2 L7.0 54.6 L6.5 54.0 L6.0 53.4 L5.5 53.6 L5.0 53.8 L4.5 54.1 L4.0 54.5 L3.5 55.0 L3.0 55.5 L2.5 55.6 L2.0 55.8 L1.5 56.0 L1.0 56.1 L0.5 56.3 L0.0 56.5 Z" fill="#2a2c2c"/><path d="M0.0 80.0 L0.5 80.6 L1.0 81.3 L1.5 81.9 L2.0 82.5 L2.5 83.1 L3.0 83.7 L3.5 83.5 L4.0 83.2 L4.5 82.9 L5.0 82.4 L5.5 81.9 L6.0 81.4 L6.5 81.6 L7.0 81.8 L7.5 82.0 L8.0 82.2 L8.5 82.4 L9.0 82.6 L9.5 82.2 L10.0 81.9 L10.5 81.5 L11.0 81.2 L11.5 80.8 L12.0 80.4 L12.5 81.0 L13.0 81.6 L13.5 82.2 L14.0 82.8 L14.5 83.4 L15.0 84.0 L15.5 83.7 L16.0 83.3 L16.5 82.9 L17.0 82.6 L17.5 82.2 L18.0 81.8 L18.5 82.0 L19.0 82.2 L19.5 82.4 L20.0 82.6 L20.5 83.0 L21.0 84.2 L21.5 85.2 L22.0 86.2 L22.5 87.2 L23.0 88.2 L23.5 89.2 L24.0 90.2 L24.5 91.2 L25.0 92.3 L25.5 93.3 L26.0 94.3 L26.5 95.3 L27.0 96.3 L27.5 97.8 L28.0 100.1 L28.5 101.2 L29.0 102.3 L29.5 102.5 L30.0 102.5 L30.0 102.5 L29.5 102.5 L29.0 102.7 L28.5 103.8 L28.0 104.9 L27.5 105.3 L27.0 106.2 L26.5 107.5 L26.0 108.7 L25.5 110.0 L25.0 111.2 L24.5 112.4 L24.0 113.7 L23.5 115.0 L23.0 116.3 L22.5 117.6 L22.0 118.9 L21.5 120.2 L21.0 121.5 L20.5 122.3 L20.0 122.2 L19.5 121.9 L19.0 121.6 L18.5 121.3 L18.0 121.1 L17.5 121.5 L17.0 121.9 L16.5 122.3 L16.0 122.7 L15.5 123.1 L15.0 123.5 L14.5 123.6 L14.0 123.7 L13.5 123.8 L13.0 123.9 L12.5 124.1 L12.0 124.2 L11.5 124.3 L11.0 124.3 L10.5 124.4 L10.0 124.5 L9.5 124.6 L9.0 124.6 L8.5 124.2 L8.0 123.8 L7.5 123.3 L7.0 122.9 L6.5 122.4 L6.0 122.0 L5.5 121.9 L5.0 121.8 L4.5 121.7 L4.0 121.8 L3.5 121.9 L3.0 122.1 L2.5 122.2 L2.0 122.3 L1.5 122.4 L1.0 122.6 L0.5 122.7 L0.0 122.8 Z" fill="#2a2c2c"/><rect x="0" y="34" width="30" height="1" fill="#2a2c2c"/><rect x="0" y="102" width="30" height="1" fill="#2a2c2c"/></svg>
<svg class="a" style="left:326px;top:189px" width="31" height="137"><path d="M0.0 15.1 L0.5 14.9 L1.0 14.8 L1.5 14.6 L2.0 14.4 L2.5 14.3 L3.0 14.1 L3.5 14.3 L4.0 14.4 L4.5 14.6 L5.0 14.7 L5.5 14.9 L6.0 15.0 L6.5 14.9 L7.0 14.6 L7.5 14.3 L8.0 14.0 L8.5 13.7 L9.0 13.4 L9.5 13.1 L10.0 12.9 L10.5 12.6 L11.0 12.4 L11.5 12.1 L12.0 11.9 L12.5 11.2 L13.0 10.5 L13.5 10.3 L14.0 10.2 L14.5 10.0 L15.0 9.9 L15.5 10.0 L16.0 10.1 L16.5 10.3 L17.0 10.4 L17.5 10.8 L18.0 11.7 L18.5 12.8 L19.0 13.9 L19.5 15.1 L20.0 16.2 L20.5 17.3 L21.0 18.4 L21.5 19.3 L22.0 20.3 L22.5 21.3 L23.0 22.2 L23.5 23.2 L24.0 24.1 L24.5 25.2 L25.0 26.3 L25.5 27.4 L26.0 28.5 L26.5 29.6 L27.0 30.7 L27.5 31.8 L28.0 31.7 L28.5 32.7 L29.0 33.6 L29.5 34.5 L30.0 34.5 L30.5 34.5 L31.0 34.5 L31.0 34.5 L30.5 34.5 L30.0 34.5 L29.5 34.5 L29.0 35.4 L28.5 36.3 L28.0 37.3 L27.5 36.9 L27.0 37.7 L26.5 38.9 L26.0 40.2 L25.5 41.5 L25.0 42.7 L24.5 44.0 L24.0 45.2 L23.5 46.3 L23.0 47.4 L22.5 48.5 L22.0 49.6 L21.5 50.7 L21.0 51.8 L20.5 52.7 L20.0 53.5 L19.5 54.4 L19.0 55.3 L18.5 56.2 L18.0 57.0 L17.5 58.1 L17.0 58.6 L16.5 58.9 L16.0 59.2 L15.5 59.5 L15.0 59.8 L14.5 59.4 L14.0 59.1 L13.5 58.7 L13.0 58.3 L12.5 57.4 L12.0 56.5 L11.5 56.3 L11.0 56.0 L10.5 55.7 L10.0 55.4 L9.5 55.1 L9.0 54.8 L8.5 54.4 L8.0 54.0 L7.5 53.7 L7.0 53.3 L6.5 52.9 L6.0 52.7 L5.5 53.1 L5.0 53.5 L4.5 54.0 L4.0 54.4 L3.5 54.8 L3.0 55.2 L2.5 54.9 L2.0 54.7 L1.5 54.4 L1.0 54.2 L0.5 53.9 L0.0 53.6 Z" fill="#2e1b25"/><path d="M0.0 82.4 L0.5 82.2 L1.0 82.0 L1.5 81.9 L2.0 81.7 L2.5 81.5 L3.0 81.4 L3.5 81.5 L4.0 81.7 L4.5 81.9 L5.0 82.0 L5.5 82.2 L6.0 82.4 L6.5 82.5 L7.0 82.5 L7.5 82.4 L8.0 82.3 L8.5 82.3 L9.0 82.2 L9.5 81.5 L10.0 80.8 L10.5 80.0 L11.0 79.3 L11.5 78.5 L12.0 77.8 L12.5 77.5 L13.0 77.3 L13.5 77.5 L14.0 77.8 L14.5 78.1 L15.0 78.4 L15.5 78.8 L16.0 79.3 L16.5 79.8 L17.0 80.2 L17.5 80.9 L18.0 82.2 L18.5 82.6 L19.0 83.1 L19.5 83.6 L20.0 84.0 L20.5 84.5 L21.0 85.0 L21.5 86.3 L22.0 87.6 L22.5 88.9 L23.0 90.3 L23.5 91.6 L24.0 92.9 L24.5 93.8 L25.0 94.8 L25.5 95.7 L26.0 96.6 L26.5 97.5 L27.0 98.5 L27.5 99.3 L28.0 99.7 L28.5 100.7 L29.0 101.6 L29.5 102.5 L30.0 102.5 L30.5 102.5 L31.0 102.5 L31.0 102.5 L30.5 102.5 L30.0 102.5 L29.5 102.5 L29.0 103.4 L28.5 104.3 L28.0 105.3 L27.5 105.4 L27.0 105.9 L26.5 107.0 L26.0 108.2 L25.5 109.3 L25.0 110.5 L24.5 111.6 L24.0 112.8 L23.5 113.7 L23.0 114.6 L22.5 115.4 L22.0 116.3 L21.5 117.2 L21.0 118.1 L20.5 119.0 L20.0 119.8 L19.5 120.7 L19.0 121.5 L18.5 122.4 L18.0 123.3 L17.5 124.6 L17.0 125.3 L16.5 125.8 L16.0 126.3 L15.5 126.8 L15.0 127.2 L14.5 127.3 L14.0 127.3 L13.5 127.4 L13.0 127.4 L12.5 126.9 L12.0 126.4 L11.5 126.1 L11.0 125.8 L10.5 125.5 L10.0 125.2 L9.5 124.9 L9.0 124.6 L8.5 124.1 L8.0 123.5 L7.5 123.0 L7.0 122.5 L6.5 121.9 L6.0 121.6 L5.5 121.9 L5.0 122.2 L4.5 122.5 L4.0 122.8 L3.5 123.0 L3.0 123.3 L2.5 123.4 L2.0 123.4 L1.5 123.5 L1.0 123.5 L0.5 123.6 L0.0 123.6 Z" fill="#2e1b25"/><rect x="0" y="34" width="31" height="1" fill="#2e1b25"/><rect x="0" y="102" width="31" height="1" fill="#2e1b25"/></svg>
<svg class="a" style="left:358px;top:189px" width="30" height="137"><path d="M0.0 4.1 L0.5 6.2 L1.0 8.4 L1.5 10.6 L2.0 12.2 L2.5 13.0 L3.0 13.7 L3.5 14.4 L4.0 15.1 L4.5 15.8 L5.0 15.5 L5.5 15.2 L6.0 15.0 L6.5 14.7 L7.0 14.4 L7.5 14.1 L8.0 13.8 L8.5 13.6 L9.0 13.3 L9.5 13.5 L10.0 13.6 L10.5 13.8 L11.0 13.9 L11.5 13.9 L12.0 14.0 L12.5 13.8 L13.0 13.6 L13.5 13.4 L14.0 13.2 L14.5 13.0 L15.0 12.8 L15.5 12.5 L16.0 12.2 L16.5 11.9 L17.0 11.6 L17.5 11.3 L18.0 11.1 L18.5 11.2 L19.0 11.3 L19.5 11.4 L20.0 11.5 L20.5 11.6 L21.0 11.7 L21.5 13.4 L22.0 15.1 L22.5 16.9 L23.0 18.6 L23.5 20.4 L24.0 22.1 L24.5 23.2 L25.0 24.3 L25.5 25.4 L26.0 26.5 L26.5 27.6 L27.0 28.7 L27.5 30.1 L28.0 32.2 L28.5 33.7 L29.0 34.5 L29.5 34.5 L30.0 34.5 L30.0 34.5 L29.5 34.5 L29.0 34.5 L28.5 35.3 L28.0 36.8 L27.5 38.0 L27.0 39.1 L26.5 40.5 L26.0 41.9 L25.5 43.3 L25.0 44.7 L24.5 46.1 L24.0 47.5 L23.5 48.8 L23.0 50.2 L22.5 51.5 L22.0 52.9 L21.5 54.2 L21.0 55.5 L20.5 56.0 L20.0 56.5 L19.5 57.0 L19.0 57.5 L18.5 58.0 L18.0 58.5 L17.5 58.6 L17.0 58.6 L16.5 58.7 L16.0 58.8 L15.5 58.8 L15.0 58.9 L14.5 58.2 L14.0 57.5 L13.5 56.8 L13.0 56.0 L12.5 55.3 L12.0 54.6 L11.5 54.4 L11.0 54.3 L10.5 54.1 L10.0 54.0 L9.5 53.9 L9.0 53.8 L8.5 54.2 L8.0 54.5 L7.5 54.9 L7.0 55.2 L6.5 55.6 L6.0 56.0 L5.5 55.5 L5.0 55.1 L4.5 54.7 L4.0 55.2 L3.5 55.7 L3.0 56.2 L2.5 57.1 L2.0 57.9 L1.5 59.6 L1.0 61.9 L0.5 64.1 L0.0 66.3 Z" fill="#2e1b25"/><path d="M0.0 70.3 L0.5 72.5 L1.0 74.6 L1.5 76.7 L2.0 78.2 L2.5 79.0 L3.0 79.7 L3.5 80.5 L4.0 81.4 L4.5 82.2 L5.0 82.1 L5.5 82.0 L6.0 81.8 L6.5 81.6 L7.0 81.5 L7.5 81.3 L8.0 81.1 L8.5 80.9 L9.0 80.7 L9.5 80.9 L10.0 81.1 L10.5 81.3 L11.0 81.3 L11.5 81.4 L12.0 81.5 L12.5 80.9 L13.0 80.4 L13.5 79.8 L14.0 79.2 L14.5 78.6 L15.0 78.0 L15.5 78.0 L16.0 78.0 L16.5 78.0 L17.0 78.0 L17.5 78.0 L18.0 78.0 L18.5 78.3 L19.0 78.6 L19.5 78.8 L20.0 79.1 L20.5 79.4 L21.0 79.7 L21.5 81.1 L22.0 82.5 L22.5 83.9 L23.0 85.3 L23.5 86.7 L24.0 88.1 L24.5 89.5 L25.0 90.8 L25.5 92.1 L26.0 93.4 L26.5 94.7 L27.0 96.0 L27.5 97.8 L28.0 100.2 L28.5 101.7 L29.0 102.5 L29.5 102.5 L30.0 102.5 L30.0 102.5 L29.5 102.5 L29.0 102.5 L28.5 103.3 L28.0 104.8 L27.5 104.8 L27.0 106.1 L26.5 107.9 L26.0 109.6 L25.5 111.4 L25.0 113.1 L24.5 114.9 L24.0 116.6 L23.5 117.7 L23.0 118.7 L22.5 119.8 L22.0 120.9 L21.5 121.9 L21.0 123.0 L20.5 123.6 L20.0 124.1 L19.5 124.7 L19.0 125.3 L18.5 125.8 L18.0 126.4 L17.5 126.4 L17.0 126.3 L16.5 126.3 L16.0 126.3 L15.5 126.2 L15.0 126.2 L14.5 125.6 L14.0 125.0 L13.5 124.4 L13.0 123.8 L12.5 123.2 L12.0 122.6 L11.5 122.9 L11.0 123.2 L10.5 123.4 L10.0 123.8 L9.5 124.2 L9.0 124.6 L8.5 124.1 L8.0 123.7 L7.5 123.3 L7.0 122.8 L6.5 122.4 L6.0 121.9 L5.5 122.0 L5.0 122.1 L4.5 122.2 L4.0 123.2 L3.5 124.3 L3.0 125.3 L2.5 126.0 L2.0 126.8 L1.5 128.4 L1.0 130.5 L0.5 132.6 L0.0 134.8 Z" fill="#2e1b25"/><rect x="0" y="34" width="30" height="1" fill="#2e1b25"/><rect x="0" y="102" width="30" height="1" fill="#2e1b25"/></svg>
<svg class="a" style="left:389px;top:189px" width="32" height="137"><path d="M0.0 14.4 L0.5 15.0 L1.0 15.6 L1.5 16.3 L2.0 16.9 L2.5 17.5 L3.0 18.1 L3.5 19.0 L4.0 20.0 L4.5 21.0 L5.0 22.0 L5.5 23.0 L6.0 23.2 L6.5 22.0 L7.0 20.8 L7.5 19.7 L8.0 18.5 L8.5 17.3 L9.0 16.1 L9.5 15.5 L10.0 15.3 L10.5 15.2 L11.0 15.1 L11.5 15.0 L12.0 14.9 L12.5 14.6 L13.0 14.3 L13.5 13.9 L14.0 13.6 L14.5 13.2 L15.0 12.9 L15.5 13.3 L16.0 13.6 L16.5 14.0 L17.0 14.7 L17.5 15.5 L18.0 16.2 L18.5 17.0 L19.0 17.8 L19.5 18.6 L20.0 19.4 L20.5 20.1 L21.0 20.9 L21.5 21.4 L22.0 21.9 L22.5 22.5 L23.0 23.0 L23.5 23.5 L24.0 24.0 L24.5 24.8 L25.0 25.5 L25.5 26.3 L26.0 27.1 L26.5 27.9 L27.0 28.6 L27.5 29.2 L28.0 29.8 L28.5 30.4 L29.0 31.7 L29.5 32.4 L30.0 33.1 L30.5 33.8 L31.0 34.4 L31.5 34.5 L32.0 34.5 L32.0 34.5 L31.5 34.5 L31.0 34.6 L30.5 35.2 L30.0 35.9 L29.5 36.6 L29.0 37.3 L28.5 37.9 L28.0 38.1 L27.5 38.4 L27.0 38.6 L26.5 39.7 L26.0 40.8 L25.5 41.9 L25.0 43.0 L24.5 44.1 L24.0 45.2 L23.5 45.5 L23.0 45.8 L22.5 46.1 L22.0 46.4 L21.5 46.7 L21.0 47.0 L20.5 48.0 L20.0 49.0 L19.5 50.0 L19.0 51.0 L18.5 52.0 L18.0 53.0 L17.5 53.7 L17.0 54.4 L16.5 55.0 L16.0 55.4 L15.5 55.7 L15.0 56.0 L14.5 55.4 L14.0 54.9 L13.5 54.4 L13.0 53.8 L12.5 53.3 L12.0 52.8 L11.5 52.8 L11.0 52.8 L10.5 52.8 L10.0 52.8 L9.5 52.8 L9.0 52.3 L8.5 51.2 L8.0 50.1 L7.5 49.0 L7.0 47.9 L6.5 46.8 L6.0 45.8 L5.5 45.9 L5.0 46.9 L4.5 47.8 L4.0 48.8 L3.5 49.8 L3.0 50.6 L2.5 51.3 L2.0 52.0 L1.5 52.7 L1.0 53.4 L0.5 54.1 L0.0 54.8 Z" fill="#2e1b25"/><path d="M0.0 82.7 L0.5 83.2 L1.0 83.6 L1.5 84.0 L2.0 84.5 L2.5 84.9 L3.0 85.3 L3.5 86.3 L4.0 87.5 L4.5 88.7 L5.0 89.9 L5.5 91.1 L6.0 91.5 L6.5 90.5 L7.0 89.6 L7.5 88.7 L8.0 87.8 L8.5 86.9 L9.0 86.0 L9.5 85.3 L10.0 85.1 L10.5 84.9 L11.0 84.8 L11.5 84.7 L12.0 84.5 L12.5 84.3 L13.0 84.1 L13.5 83.8 L14.0 83.6 L14.5 83.3 L15.0 83.1 L15.5 83.2 L16.0 83.4 L16.5 83.5 L17.0 84.0 L17.5 84.5 L18.0 85.1 L18.5 85.9 L19.0 86.6 L19.5 87.4 L20.0 88.2 L20.5 89.0 L21.0 89.8 L21.5 90.4 L22.0 91.0 L22.5 91.6 L23.0 92.1 L23.5 92.7 L24.0 93.3 L24.5 93.8 L25.0 94.3 L25.5 94.7 L26.0 95.2 L26.5 95.6 L27.0 96.1 L27.5 97.2 L28.0 98.3 L28.5 99.3 L29.0 99.7 L29.5 100.4 L30.0 101.1 L30.5 101.8 L31.0 102.4 L31.5 102.5 L32.0 102.5 L32.0 102.5 L31.5 102.5 L31.0 102.6 L30.5 103.2 L30.0 103.9 L29.5 104.6 L29.0 105.3 L28.5 105.1 L28.0 105.8 L27.5 106.4 L27.0 107.1 L26.5 108.2 L26.0 109.3 L25.5 110.3 L25.0 111.4 L24.5 112.5 L24.0 113.6 L23.5 114.2 L23.0 114.8 L22.5 115.4 L22.0 115.9 L21.5 116.5 L21.0 117.1 L20.5 117.6 L20.0 118.2 L19.5 118.7 L19.0 119.2 L18.5 119.8 L18.0 120.3 L17.5 120.8 L17.0 121.4 L16.5 121.8 L16.0 121.9 L15.5 122.0 L15.0 122.1 L14.5 122.2 L14.0 122.3 L13.5 122.3 L13.0 122.4 L12.5 122.5 L12.0 122.5 L11.5 122.3 L11.0 122.1 L10.5 121.9 L10.0 121.7 L9.5 121.4 L9.0 120.7 L8.5 119.6 L8.0 118.4 L7.5 117.3 L7.0 116.2 L6.5 115.1 L6.0 114.0 L5.5 114.4 L5.0 115.6 L4.5 116.9 L4.0 118.1 L3.5 119.4 L3.0 120.5 L2.5 121.1 L2.0 121.6 L1.5 122.2 L1.0 122.8 L0.5 123.4 L0.0 123.9 Z" fill="#2e1b25"/><rect x="0" y="34" width="32" height="1" fill="#2e1b25"/><rect x="0" y="102" width="32" height="1" fill="#2e1b25"/></svg>
<svg class="a" style="left:422px;top:189px" width="30" height="137"><path d="M0.0 8.0 L0.5 8.5 L1.0 8.9 L1.5 9.4 L2.0 9.8 L2.5 10.3 L3.0 10.7 L3.5 11.5 L4.0 12.3 L4.5 13.0 L5.0 13.6 L5.5 14.2 L6.0 14.8 L6.5 14.9 L7.0 15.0 L7.5 15.0 L8.0 15.1 L8.5 15.2 L9.0 14.7 L9.5 14.5 L10.0 14.3 L10.5 14.1 L11.0 13.8 L11.5 13.6 L12.0 13.4 L12.5 12.8 L13.0 12.1 L13.5 11.4 L14.0 10.7 L14.5 10.1 L15.0 10.1 L15.5 10.1 L16.0 10.1 L16.5 10.1 L17.0 10.0 L17.5 10.0 L18.0 10.0 L18.5 10.4 L19.0 10.9 L19.5 11.4 L20.0 11.8 L20.5 12.3 L21.0 12.7 L21.5 13.0 L22.0 14.1 L22.5 15.1 L23.0 16.1 L23.5 17.1 L24.0 18.1 L24.5 19.5 L25.0 20.9 L25.5 22.4 L26.0 23.8 L26.5 25.3 L27.0 26.7 L27.5 28.1 L28.0 29.5 L28.5 30.9 L29.0 32.7 L29.5 34.0 L30.0 34.5 L30.0 34.5 L29.5 35.0 L29.0 36.3 L28.5 37.3 L28.0 38.4 L27.5 39.5 L27.0 40.5 L26.5 42.2 L26.0 43.8 L25.5 45.5 L25.0 47.1 L24.5 48.8 L24.0 50.4 L23.5 51.6 L23.0 52.7 L22.5 53.8 L22.0 55.0 L21.5 56.1 L21.0 56.5 L20.5 56.6 L20.0 56.6 L19.5 56.7 L19.0 56.8 L18.5 56.8 L18.0 56.9 L17.5 56.9 L17.0 57.0 L16.5 57.0 L16.0 57.1 L15.5 57.1 L15.0 57.2 L14.5 57.8 L14.0 57.9 L13.5 57.8 L13.0 57.7 L12.5 57.6 L12.0 57.5 L11.5 57.1 L11.0 56.6 L10.5 56.2 L10.0 55.8 L9.5 55.3 L9.0 54.9 L8.5 54.4 L8.0 54.5 L7.5 54.6 L7.0 54.7 L6.5 54.8 L6.0 54.9 L5.5 55.7 L5.0 56.4 L4.5 57.1 L4.0 58.0 L3.5 59.0 L3.0 59.9 L2.5 60.1 L2.0 60.4 L1.5 60.6 L1.0 60.9 L0.5 61.1 L0.0 61.4 Z" fill="#2e1b25"/><path d="M0.0 76.5 L0.5 76.6 L1.0 76.8 L1.5 76.9 L2.0 77.0 L2.5 77.2 L3.0 77.3 L3.5 78.3 L4.0 79.3 L4.5 80.3 L5.0 81.2 L5.5 82.0 L6.0 82.9 L6.5 83.0 L7.0 83.1 L7.5 83.2 L8.0 83.3 L8.5 83.4 L9.0 82.9 L9.5 82.4 L10.0 81.8 L10.5 81.2 L11.0 80.6 L11.5 80.1 L12.0 79.5 L12.5 79.0 L13.0 78.6 L13.5 78.1 L14.0 77.6 L14.5 77.3 L15.0 77.5 L15.5 77.9 L16.0 78.3 L16.5 78.8 L17.0 79.2 L17.5 79.6 L18.0 80.0 L18.5 80.1 L19.0 80.3 L19.5 80.4 L20.0 80.6 L20.5 80.7 L21.0 80.9 L21.5 81.3 L22.0 82.4 L22.5 83.5 L23.0 84.6 L23.5 85.7 L24.0 86.9 L24.5 88.0 L25.0 89.2 L25.5 90.4 L26.0 91.6 L26.5 92.8 L27.0 93.9 L27.5 95.4 L28.0 96.9 L28.5 98.4 L29.0 100.7 L29.5 102.0 L30.0 102.5 L30.0 102.5 L29.5 103.0 L29.0 104.3 L28.5 106.3 L28.0 107.5 L27.5 108.6 L27.0 109.8 L26.5 111.2 L26.0 112.6 L25.5 113.9 L25.0 115.3 L24.5 116.7 L24.0 118.1 L23.5 119.1 L23.0 120.2 L22.5 121.3 L22.0 122.3 L21.5 123.4 L21.0 123.7 L20.5 123.8 L20.0 123.9 L19.5 124.0 L19.0 124.0 L18.5 124.1 L18.0 124.2 L17.5 124.7 L17.0 125.2 L16.5 125.6 L16.0 126.1 L15.5 126.6 L15.0 127.1 L14.5 127.3 L14.0 126.9 L13.5 126.4 L13.0 125.9 L12.5 125.4 L12.0 124.8 L11.5 124.3 L11.0 123.7 L10.5 123.1 L10.0 122.6 L9.5 122.0 L9.0 121.4 L8.5 121.2 L8.0 121.6 L7.5 121.9 L7.0 122.3 L6.5 122.7 L6.0 123.0 L5.5 123.6 L5.0 124.2 L4.5 124.7 L4.0 125.5 L3.5 126.2 L3.0 127.0 L2.5 127.4 L2.0 127.8 L1.5 128.2 L1.0 128.7 L0.5 129.1 L0.0 129.5 Z" fill="#2e1b25"/><rect x="0" y="34" width="30" height="1" fill="#2e1b25"/><rect x="0" y="102" width="30" height="1" fill="#2e1b25"/></svg>
<svg class="a" style="left:453px;top:189px" width="36" height="137"><path d="M0.0 14.0 L0.5 14.4 L1.0 14.8 L1.5 15.1 L2.0 15.5 L2.5 15.9 L3.0 16.2 L3.5 16.5 L4.0 16.8 L4.5 17.1 L5.0 17.4 L5.5 17.8 L6.0 18.1 L6.5 18.8 L7.0 19.6 L7.5 20.3 L8.0 20.9 L8.5 20.8 L9.0 20.7 L9.5 20.3 L10.0 20.0 L10.5 19.6 L11.0 19.2 L11.5 18.9 L12.0 18.5 L12.5 17.9 L13.0 17.5 L13.5 17.0 L14.0 16.6 L14.5 16.1 L15.0 15.7 L15.5 15.6 L16.0 15.4 L16.5 15.3 L17.0 15.1 L17.5 15.0 L18.0 15.3 L18.5 15.7 L19.0 16.1 L19.5 16.5 L20.0 17.2 L20.5 18.2 L21.0 19.2 L21.5 20.1 L22.0 21.0 L22.5 21.9 L23.0 22.8 L23.5 23.7 L24.0 24.6 L24.5 25.5 L25.0 26.5 L25.5 27.5 L26.0 28.4 L26.5 29.4 L27.0 30.4 L27.5 31.4 L28.0 31.7 L28.5 32.6 L29.0 33.5 L29.5 34.5 L30.0 34.5 L30.5 34.5 L31.0 34.5 L31.5 34.5 L32.0 34.5 L32.5 34.5 L33.0 34.5 L33.5 34.5 L34.0 34.5 L34.5 34.5 L35.0 34.5 L35.5 34.5 L36.0 34.5 L36.0 34.5 L35.5 34.5 L35.0 34.5 L34.5 34.5 L34.0 34.5 L33.5 34.5 L33.0 34.5 L32.5 34.5 L32.0 34.5 L31.5 34.5 L31.0 34.5 L30.5 34.5 L30.0 34.5 L29.5 34.5 L29.0 35.5 L28.5 36.4 L28.0 37.3 L27.5 38.7 L27.0 39.5 L26.5 40.7 L26.0 41.8 L25.5 42.9 L25.0 44.0 L24.5 45.1 L24.0 46.3 L23.5 46.8 L23.0 47.4 L22.5 48.0 L22.0 48.6 L21.5 49.2 L21.0 49.8 L20.5 51.0 L20.0 52.3 L19.5 53.2 L19.0 53.9 L18.5 54.6 L18.0 55.3 L17.5 55.1 L17.0 54.5 L16.5 53.9 L16.0 53.3 L15.5 52.6 L15.0 52.0 L14.5 51.8 L14.0 51.5 L13.5 51.3 L13.0 51.0 L12.5 50.8 L12.0 50.4 L11.5 50.3 L11.0 50.1 L10.5 50.0 L10.0 49.9 L9.5 49.7 L9.0 49.6 L8.5 48.9 L8.0 48.3 L7.5 48.3 L7.0 48.5 L6.5 48.6 L6.0 48.8 L5.5 49.4 L5.0 50.0 L4.5 50.7 L4.0 51.2 L3.5 51.8 L3.0 52.4 L2.5 52.7 L2.0 53.1 L1.5 53.4 L1.0 53.8 L0.5 54.1 L0.0 54.5 Z" fill="#2e1b25"/><path d="M0.0 82.3 L0.5 82.7 L1.0 83.2 L1.5 83.7 L2.0 84.2 L2.5 84.6 L3.0 85.1 L3.5 85.2 L4.0 85.3 L4.5 85.5 L5.0 85.6 L5.5 85.8 L6.0 86.0 L6.5 86.7 L7.0 87.4 L7.5 88.0 L8.0 88.6 L8.5 88.4 L9.0 88.3 L9.5 87.9 L10.0 87.5 L10.5 87.1 L11.0 86.7 L11.5 86.3 L12.0 85.8 L12.5 85.5 L13.0 85.2 L13.5 84.9 L14.0 84.7 L14.5 84.4 L15.0 84.1 L15.5 84.0 L16.0 83.9 L16.5 83.7 L17.0 83.6 L17.5 83.5 L18.0 83.8 L18.5 84.0 L19.0 84.1 L19.5 84.3 L20.0 84.7 L20.5 85.5 L21.0 86.3 L21.5 87.1 L22.0 87.8 L22.5 88.6 L23.0 89.4 L23.5 90.2 L24.0 91.0 L24.5 92.4 L25.0 93.7 L25.5 95.1 L26.0 96.5 L26.5 97.8 L27.0 99.2 L27.5 99.9 L28.0 99.7 L28.5 100.6 L29.0 101.5 L29.5 102.5 L30.0 102.5 L30.5 102.5 L31.0 102.5 L31.5 102.5 L32.0 102.5 L32.5 102.5 L33.0 102.5 L33.5 102.5 L34.0 102.5 L34.5 102.5 L35.0 102.5 L35.5 102.5 L36.0 102.5 L36.0 102.5 L35.5 102.5 L35.0 102.5 L34.5 102.5 L34.0 102.5 L33.5 102.5 L33.0 102.5 L32.5 102.5 L32.0 102.5 L31.5 102.5 L31.0 102.5 L30.5 102.5 L30.0 102.5 L29.5 102.5 L29.0 103.5 L28.5 104.4 L28.0 105.3 L27.5 105.7 L27.0 106.3 L26.5 107.3 L26.0 108.3 L25.5 109.3 L25.0 110.3 L24.5 111.3 L24.0 112.3 L23.5 113.3 L23.0 114.4 L22.5 115.4 L22.0 116.4 L21.5 117.5 L21.0 118.5 L20.5 119.3 L20.0 120.1 L19.5 120.6 L19.0 120.8 L18.5 121.0 L18.0 121.3 L17.5 121.3 L17.0 121.0 L16.5 120.6 L16.0 120.3 L15.5 119.9 L15.0 119.5 L14.5 119.6 L14.0 119.8 L13.5 119.9 L13.0 120.0 L12.5 120.1 L12.0 120.1 L11.5 119.7 L11.0 119.3 L10.5 119.0 L10.0 118.6 L9.5 118.2 L9.0 117.8 L8.5 117.5 L8.0 117.2 L7.5 117.5 L7.0 118.1 L6.5 118.6 L6.0 119.1 L5.5 119.4 L5.0 119.7 L4.5 119.9 L4.0 120.2 L3.5 120.4 L3.0 120.7 L2.5 120.8 L2.0 121.0 L1.5 121.2 L1.0 121.4 L0.5 121.6 L0.0 121.8 Z" fill="#2e1b25"/><rect x="0" y="34" width="36" height="1" fill="#2e1b25"/><rect x="0" y="102" width="36" height="1" fill="#2e1b25"/></svg>
<div class="a t" style="left:561px;top:125px;width:28px;height:11px;border-radius:6px;background:#55524b;color:#f2f2f2;font-size:10px;font-weight:bold;line-height:11px;text-align:center">Set</div>
<svg class="a" style="left:560px;top:139px" width="30" height="13"><circle cx="6.6" cy="6.7" r="5.3" fill="#55524b"/><circle cx="23.2" cy="6.7" r="5.3" fill="#55524b"/><path d="M5 6.7 H10" stroke="#f4f4f4" stroke-width="1.8"/><path d="M7 3.3 L3 6.7 L7 10.1 Z" fill="#f4f4f4"/><path d="M20.2 6.7 H25" stroke="#f4f4f4" stroke-width="1.8"/><path d="M23 3.3 L27 6.7 L23 10.1 Z" fill="#f4f4f4"/></svg>
<div class="a" style="left:602px;top:140px;width:21px;height:11px;background:#55524b"><svg class="a" style="left:0;top:0" width="21" height="11"><circle cx="8" cy="7.5" r="1.5" fill="#f0f0f0"/><circle cx="13" cy="3.5" r="1.5" fill="#f0f0f0"/><path d="M8 7.5 L13 3.5" stroke="#f0f0f0" stroke-width="1"/></svg></div>
<div class="a" style="left:629px;top:140px;width:21px;height:11px;background:#55524b"><svg class="a" style="left:0;top:0" width="21" height="11"><rect x="7" y="5" width="7" height="4.5" fill="#f0f0f0"/><path d="M8.3 5.2 V4 Q8.3 2 10.5 2 Q12.7 2 12.7 4 V5.2" stroke="#f0f0f0" stroke-width="1.1" fill="none"/></svg></div>
<div class="a" style="left:558px;top:157px;width:186px;height:13px;background:#fb3b3b"></div>
<svg class="a" style="left:560px;top:154px" width="16" height="16"><circle cx="7.4" cy="7.4" r="5.8" fill="none" stroke="#6a1f2c" stroke-width="1"/><path d="M5.6 4.2 L10.2 7.4 L5.6 10.6 Z" fill="#5a1c2a"/></svg>
<div class="a t" style="left:582px;top:155px;font-size:10.8px;line-height:12px;color:#2a161a;-webkit-text-stroke:0.35px #2a161a;letter-spacing:0.35px">chords</div>
<div class="a" style="left:558px;top:172px;width:186px;height:154px;background:#e05ba0"></div>
<svg class="a" style="left:560px;top:173px" width="16" height="16"><circle cx="7.4" cy="7.5" r="5.9" fill="none" stroke="#6a2050" stroke-width="1"/><path d="M4.3 5.9 L10.5 5.9 L7.4 10.2 Z" fill="#501a40"/></svg>
<div class="a t" style="left:582px;top:173.5px;font-size:10.8px;line-height:12px;color:#381c38;-webkit-text-stroke:0.35px #381c38;letter-spacing:0.35px">printing-chords</div>
<div class="a" style="left:744px;top:156px;width:2px;height:242px;background:#45423c"></div>
<div class="a" style="left:746px;top:157px;width:74px;height:13px;background:#636057"></div>
<div class="a" style="left:748px;top:157px;width:70px;height:11px;border:1px solid #44413b;background:#636057"></div>
<div class="a" style="left:746px;top:170px;width:74px;height:2px;background:#45423c"></div>
<div class="a" style="left:746px;top:172px;width:74px;height:154px;background:#7c796d"></div>
<div class="a sb" style="left:748px;top:174px;width:70px;height:12.5px;line-height:12.5px;padding-left:2px;border:1px solid #36342f">chords<svg class="a" style="left:61px;top:3px" width="8" height="6"><path d="M0 0 H7.6 L3.8 5.5 Z" fill="#f0f0f0"/></svg></div>
<div class="a sb" style="left:748px;top:191px;width:70px;height:12.5px;line-height:12.5px;padding-left:2px;border:1px solid #36342f"><span class="a" style="left:1.5px;top:1.5px;width:2.2px;height:9.5px;background:#2a2825;border-top:1px solid #5a574f"></span><span class="a" style="left:5px;top:1.5px;width:2.2px;height:9.5px;background:#2a2825;border-top:1px solid #5a574f"></span><span style="margin-left:9px">Post Mixer</span><svg class="a" style="left:61px;top:3px" width="8" height="6"><path d="M0 0 H7.6 L3.8 5.5 Z" fill="#f0f0f0"/></svg></div>
<div class="a sb" style="left:748px;top:208px;width:17px;height:13px;line-height:12px;text-align:center;border:1px solid #36342f;background:#56534c">In</div>
<div class="a sb" style="left:768px;top:208px;width:27px;height:13px;line-height:12px;text-align:center;border:1px solid #36342f;background:#f8b133;color:#2a1a12">Auto</div>
<div class="a sb" style="left:798px;top:208px;width:20px;height:13px;line-height:12px;text-align:center;border:1px solid #36342f;background:#56534c">Off</div>
<div class="a sb" style="left:748px;top:225px;width:70px;height:12.5px;line-height:12.5px;padding-left:2px;border:1px solid #36342f">Master<svg class="a" style="left:61px;top:3px" width="8" height="6"><path d="M0 0 H7.6 L3.8 5.5 Z" fill="#f0f0f0"/></svg></div>
<div class="a" style="left:748px;top:242px;width:70px;height:13px;border:1px solid #44413b"></div>
<div class="a" style="left:820px;top:156px;width:2px;height:242px;background:#45423c"></div>
<div class="a" style="left:822px;top:157px;width:115px;height:13px;background:#636057"></div>
<div class="a" style="left:822px;top:170px;width:115px;height:2px;background:#45423c"></div>
<div class="a" style="left:822px;top:172px;width:115px;height:154px;background:#7c796d"></div>
<div class="a sb" style="left:825px;top:157px;width:46px;height:11px;line-height:10px;text-align:center;border:1px solid #36342f;background:#55524b;color:#f2f2f2">1</div>
<div class="a sb" style="left:875px;top:157px;width:21px;height:11px;line-height:10px;text-align:center;border:1px solid #36342f;background:#55524b;color:#f2f2f2">S</div>
<div class="a sb" style="left:825px;top:174px;width:46px;height:13px;line-height:12px;text-align:center;border:1px solid #36342f;background:#f8b133;color:#2a1a12">2</div>
<div class="a sb" style="left:875px;top:174px;width:21px;height:13px;line-height:12px;text-align:center;border:1px solid #36342f;background:#56534c;color:#f2f2f2">S</div>
<div class="a" style="left:900px;top:174px;width:21px;height:13px;border:1px solid #36342f;background:#fb3b3b"><div class="a" style="left:6px;top:2.5px;width:7px;height:7px;border-radius:50%;background:#2a1a1a"></div></div>
<div class="a" style="left:825px;top:191px;width:46px;height:13px;border:1px solid #36342f;background:#45423c"><div class="a" style="left:0;top:0;width:37px;height:11px;background:#3f6375"></div><div class="a sb" style="left:0;top:0;width:44px;height:11px;line-height:11px;text-align:center;background:transparent">0</div></div>
<div class="a sb" style="left:875px;top:191px;width:46px;height:13px;line-height:12px;text-align:center;border:1px solid #36342f;background:#45423c;color:#f2f2f2">C</div>
<div class="a" style="left:927px;top:157px;width:3px;height:169px;background:#2c2a27"></div>
<div class="a" style="left:927px;top:170px;width:3px;height:2px;background:#5a574f"></div>
<div class="a" style="left:931px;top:157px;width:3px;height:169px;background:#2c2a27"></div>
<div class="a" style="left:931px;top:170px;width:3px;height:2px;background:#5a574f"></div>
<div class="a" style="left:934px;top:157px;width:3px;height:169px;background:#636057"></div>
<div class="a" style="left:947px;top:137px;width:7px;height:150px;border-radius:4px;background:#4b4842"></div>
<div class="a t" style="left:943.5px;top:303.5px;width:13px;height:13px;border-radius:50%;background:#f8b133;color:#2a1a12;font-size:7px;font-weight:bold;line-height:13px;text-align:center">I·O</div>
<div class="a t" style="left:943.5px;top:322.5px;width:13px;height:13px;border-radius:50%;background:#eeeeee;color:#2a2a2a;font-size:7px;font-weight:bold;line-height:13px;text-align:center">R</div>
<div class="a t" style="left:943.5px;top:341.5px;width:13px;height:13px;border-radius:50%;background:#f8b133;color:#2a1a12;font-size:7px;font-weight:bold;line-height:13px;text-align:center">M</div>
<div class="a t" style="left:943.5px;top:360.5px;width:13px;height:13px;border-radius:50%;background:#9a9891;color:#2a2a2a;font-size:7px;font-weight:bold;line-height:13px;text-align:center">D</div>
<div class="a" style="left:84px;top:328px;width:853px;height:36px;background:#636057"></div>
<div class="a" style="left:556px;top:326px;width:2px;height:72px;background:#45423c"></div>
<div class="a" style="left:84px;top:326px;width:853px;height:2px;background:#45423c"></div>
<div class="a" style="left:84px;top:364px;width:853px;height:2px;background:#45423c"></div>
<div class="a" style="left:84px;top:366px;width:853px;height:18px;background:#636057"></div>
<div class="a" style="left:908px;top:368px;width:13px;height:13px;border:1px solid #36342f;background:#55524b"></div>
<div class="a" style="left:927px;top:366px;width:3px;height:18px;background:#3a1f28"></div>
<div class="a" style="left:931px;top:366px;width:3px;height:18px;background:#3a1f28"></div>
<div class="t a" style="left:253px;top:340px;font-size:10.6px;color:#f2f2f2;-webkit-text-stroke:0.35px #f2f2f2;letter-spacing:0.25px;line-height:12px">Drop Files and Devices Here</div>
<div class="a" style="left:57px;top:408px;width:906px;height:195px;border-radius:4px;background:#45423c"></div>
<div class="a" style="left:61px;top:412px;width:899px;height:188px;background:#68645b"></div>
<div class="a" style="left:61px;top:412px;width:20px;height:17px;background:#8a877c"></div>
<svg class="a" style="left:56px;top:380px" width="20" height="20"><circle cx="9.5" cy="9.7" r="9" fill="#48453f"/><path d="M4 8 Q6.5 5.5 9.5 8 T15 8 M4 12 Q6.5 9.5 9.5 12 T15 12" stroke="#57544c" stroke-width="1.3" fill="none"/></svg>
<div class="a" style="left:880px;top:603px;width:56px;height:31px;border-radius:0 0 4px 4px;background:#3e3b36"></div>
<div class="a t" style="left:895px;top:617px;font-size:10.4px;font-weight:bold;color:#eee;line-height:12px">chords</div>
<svg class="a" style="left:944px;top:612px" width="20" height="20"><circle cx="10" cy="10" r="9" fill="#48453f"/><path d="M10 5 L14.5 13 H5.5 Z" fill="#5e5b53"/></svg>
<svg class="a" style="left:56px;top:612px" width="20" height="20"><circle cx="10" cy="10" r="8.6" fill="#48453f"/><path d="M10 5 L14.5 13 H5.5 Z" fill="#5e5b53"/></svg>
</div></div>
<div id="dlg" class="a"><div class="a" style="left:-74px;top:-347px;width:1048px;height:743px">
<div class="a" style="left:74px;top:347px;width:841px;height:22px;background:linear-gradient(#e6e7e9,#d4d4d5);border-top:1px solid #f6f6f6;border-bottom:1px solid #bfbfbf"></div>
<div class="a" style="left:82px;top:352px;width:12px;height:12px;border-radius:50%;background:#dcdcdc;border:1px solid #c6c6c6"></div>
<div class="a" style="left:102px;top:352px;width:12px;height:12px;border-radius:50%;background:#dcdcdc;border:1px solid #c6c6c6"></div>
<div class="a" style="left:122px;top:352px;width:12px;height:12px;border-radius:50%;background:#2ac741;border:1px solid #22b134"></div>
<div class="d" style="left:444.5px;top:385px;font-size:11.4px;line-height:14px;letter-spacing:0.02px;color:#2b2b2b">Save Audio File As:</div>
<div class="d" style="left:300px;width:93.3px;text-align:right;top:418.5px;line-height:16px;letter-spacing:0.2px;font-size:13.2px;color:#7f7f7f">Save As:</div>
<div class="a" style="left:395px;top:412.5px;width:256px;height:27px;border-radius:4px;background:#75a9ef"></div>
<div class="a" style="left:398px;top:416px;width:250px;height:20px;background:#fff;box-shadow:0 0 0 1px #5c92de"></div>
<div class="d" style="left:402px;top:420px;line-height:16px;font-size:13.4px;letter-spacing:0.15px;color:#222">chord2.wav</div>
<div class="d" style="left:300px;width:93px;text-align:right;top:448px;line-height:16px;letter-spacing:0.15px;font-size:13.2px;color:#7f7f7f">Tags:</div>
<div class="a" style="left:398px;top:445px;width:250px;height:22px;background:#fff;border:1px solid #c4c4c4"></div>
<div class="a" style="left:74px;top:477px;width:841px;height:1px;background:#d8d8d8"></div>
<div class="a" style="left:85px;top:487px;width:25px;height:22px;border-radius:5px;background:linear-gradient(#fbfbfb,#f1f1f1);box-shadow:0 0 0 0.5px #cfcfcf,0 1px 1px rgba(0,0,0,.08)"><svg class="a" style="left:0;top:0" width="25" height="22"><path d="M14.5 6 L9.5 11 L14.5 16" stroke="#8f8f8f" stroke-width="1.3" fill="none"/></svg></div>
<div class="a" style="left:111px;top:487px;width:25px;height:22px;border-radius:5px;background:linear-gradient(#fbfbfb,#f1f1f1);box-shadow:0 0 0 0.5px #cfcfcf,0 1px 1px rgba(0,0,0,.08)"><svg class="a" style="left:0;top:0" width="25" height="22"><path d="M10.5 6 L15.5 11 L10.5 16" stroke="#8f8f8f" stroke-width="1.3" fill="none"/></svg></div>
<div class="a" style="left:144px;top:487px;width:44px;height:22px;border-radius:5px;background:linear-gradient(#fbfbfb,#f1f1f1);box-shadow:0 0 0 0.5px #cfcfcf,0 1px 1px rgba(0,0,0,.08)"><svg class="a" style="left:0;top:0" width="44" height="22"><path d="M9 6.5 H23.5 M9 9.6 H23.5 M9 12.5 H23.5 M9 15.4 H23.5" stroke="#4a4a4a" stroke-width="1.1"/><path d="M27 9.8 L30.5 13 L34 9.8" stroke="#4a4a4a" stroke-width="1.6" fill="none"/></svg></div>
<div class="a" style="left:194px;top:487px;width:44px;height:22px;border-radius:5px;background:linear-gradient(#fbfbfb,#f1f1f1);box-shadow:0 0 0 0.5px #cfcfcf,0 1px 1px rgba(0,0,0,.08)"><svg class="a" style="left:0;top:0" width="44" height="22"><path d="M13.5 16.5 V3.5 H18.5 L20 5 H27 V16.5 Z M13.5 7 H24" stroke="#5e5e5e" stroke-width="1" fill="none"/><path d="M28.3 6 V12 M25.3 9 H31.3" stroke="#5e5e5e" stroke-width="1.2"/></svg></div>
<div class="a" style="left:398px;top:486.5px;width:221px;height:22.5px;border-radius:5px;background:linear-gradient(#fbfbfb,#f1f1f1);box-shadow:0 0 0 0.5px #cfcfcf,0 1px 1px rgba(0,0,0,.08)"></div>
<svg class="a" style="left:403px;top:490px" width="18" height="16"><path d="M1 3 Q1 1.5 2.5 1.5 H6.5 L8 3 H15 Q16.5 3 16.5 4.5 V13.5 Q16.5 15 15 15 H2.5 Q1 15 1 13.5 Z" fill="#6aa7f4"/><rect x="1" y="5" width="15.5" height="1" fill="#4d8fe6"/></svg>
<div class="d" style="left:424px;top:490.7px;line-height:16px;font-size:13.4px;color:#4e4e4e">chords</div>
<svg class="a" style="left:605px;top:489px" width="10" height="18"><path d="M2 6.5 L5 3.5 L8 6.5 M2 11 L5 14 L8 11" stroke="#555" stroke-width="1.3" fill="none"/></svg>
<div class="a" style="left:628px;top:488px;width:19px;height:19px;border-radius:5px;background:#fff;box-shadow:0 0 0 0.5px #cfcfcf,0 1px 1px rgba(0,0,0,.08)"><svg class="a" style="left:0;top:0" width="19" height="19"><path d="M6.5 11 L9.5 8 L12.5 11" stroke="#333" stroke-width="1.5" fill="none"/></svg></div>
<div class="a" style="left:686px;top:487px;width:218px;height:22px;border-radius:5px;background:linear-gradient(#fbfbfb,#f1f1f1);box-shadow:0 0 0 0.5px #cfcfcf,0 1px 1px rgba(0,0,0,.08)"></div>
<svg class="a" style="left:689px;top:489px" width="16" height="16"><circle cx="7" cy="7.2" r="4.6" stroke="#4a4a4a" stroke-width="1.3" fill="none"/><path d="M10.3 10.5 L13.6 13.8" stroke="#4a4a4a" stroke-width="1.4"/></svg>
<div class="d" style="left:709px;top:490.7px;line-height:16px;font-size:13.3px;color:#a9a9a9">Search</div>
<div class="a" style="left:74px;top:519px;width:259px;height:99px;background:#dcdbda"></div>
<div class="d" style="left:83.5px;top:529px;font-size:11.2px;line-height:12px;color:#777;-webkit-text-stroke:0.35px #777;letter-spacing:0.15px">Favorites</div>
<svg class="a" style="left:91px;top:549px" width="20" height="70"><rect x="1.3" y="1" width="17.4" height="13.7" rx="1.3" fill="#a4a4a4" stroke="#5a5a5a" stroke-width="1.3"/><rect x="1.95" y="1.65" width="16.1" height="2.6" fill="#d6d6d6"/><rect x="1.95" y="4.2" width="16.1" height="0.9" fill="#6a6a6a"/><rect x="5.6" y="11.2" width="2" height="2" fill="#f2f2f2"/><rect x="9" y="11.2" width="2" height="2" fill="#f2f2f2"/><rect x="12.3" y="11.2" width="2" height="2" fill="#f2f2f2"/><path d="M10 26.5 L1.8 41.5 M10.3 26.5 L18.6 41" stroke="#555" stroke-width="1.7" fill="none"/><rect x="0.8" y="33.3" width="18.6" height="1.9" fill="#555"/><path d="M1.3 66.7 V52.6 Q1.3 52 2 52 H7.6 L9.6 54.6 H18 Q18.7 54.6 18.7 55.3 V66.7 Z" fill="#a6a6a6" stroke="#5a5a5a" stroke-width="1.3"/><rect x="1.95" y="55.2" width="16.1" height="1.8" fill="#d0d0d0"/><rect x="1.95" y="57" width="16.1" height="0.8" fill="#6a6a6a"/></svg>
<div class="d" style="left:116px;top:550px;line-height:16px;font-size:13.4px;letter-spacing:0.2px;color:#2a2a2a">Desktop</div>
<div class="d" style="left:116px;top:575.5px;line-height:16px;font-size:13.4px;letter-spacing:0.2px;color:#2a2a2a">Applications</div>
<div class="d" style="left:116px;top:601.5px;line-height:16px;font-size:13.4px;letter-spacing:0.2px;color:#2a2a2a">Developer</div>
<div class="a" style="left:333px;top:519px;width:1px;height:99px;background:#f6f6f6"></div>
<div class="a" style="left:334px;top:519px;width:581px;height:24px;background:#f0f0f0;border-bottom:1px solid #d2d2d2"></div>
<div class="a" style="left:533.5px;top:523px;width:1px;height:16px;background:#d4d4d4"></div>
<div class="a" style="left:715px;top:523px;width:1px;height:16px;background:#d4d4d4"></div>
<div class="a" style="left:811.5px;top:523px;width:1px;height:16px;background:#d4d4d4"></div>
<div class="d" style="left:340px;top:523.7px;font-size:11.6px;line-height:14px;-webkit-text-stroke:0.1px #262626;letter-spacing:0.2px">Name</div>
<div class="d" style="left:544px;top:523.7px;font-size:11.6px;letter-spacing:0.35px;line-height:14px;-webkit-text-stroke:0.1px #262626">Date Modified</div>
<svg class="a" style="left:697px;top:527px" width="10" height="8"><path d="M1.5 2 L5 5.5 L8.5 2" stroke="#6f6f6f" stroke-width="1.2" fill="none"/></svg>
<div class="d" style="left:726px;top:523.7px;font-size:11.6px;line-height:14px;-webkit-text-stroke:0.1px #262626;letter-spacing:0.2px">Size</div>
<div class="d" style="left:823px;top:523.7px;font-size:11.6px;line-height:14px;-webkit-text-stroke:0.1px #262626;letter-spacing:0.2px">Kind</div>
<div class="a" style="left:334px;top:543px;width:581px;height:20.5px;background:#f3f3f3"></div>
<div class="a" style="left:334px;top:563.5px;width:581px;height:19.5px;background:#ffffff"></div>
<div class="a" style="left:334px;top:583px;width:581px;height:18.5px;background:#f3f3f3"></div>
<div class="a" style="left:334px;top:601.5px;width:581px;height:17px;background:#ffffff"></div>
<svg class="a" style="left:360px;top:546px" width="17" height="17"><rect x="1" y="1" width="14" height="15" rx="1.5" fill="#f7f7f7" stroke="#d0d0d0"/><path d="M7 11 V5.5 L10.5 4.8 V10" stroke="#d2d2d2" stroke-width="0.9" fill="none"/><circle cx="6.2" cy="11" r="1" fill="#d2d2d2"/></svg>
<div class="d" style="left:380px;top:546px;font-size:13.2px;line-height:16px;color:#b9b9b9">chord1.wav</div>
<div class="d" style="left:543.8px;top:547px;font-size:12.3px;line-height:15px;color:#c2c2c2">Today at 10:15 AM</div>
<div class="d" style="left:700px;width:99px;text-align:right;top:547px;font-size:12.3px;line-height:15px;color:#c2c2c2">1.3 MB</div>
<div class="d" style="left:821.4px;top:547px;font-size:12.3px;line-height:15px;color:#c2c2c2">Waveform audio</div>
<div class="a" style="left:74px;top:618px;width:841px;height:1px;background:#d4d4d4"></div>
<div class="d" style="left:85px;top:629.5px;width:95.5px;letter-spacing:0.1px;text-indent:-2px;height:20px;border-radius:5px;background:#fff;box-shadow:0 0 0 0.5px #c2c2c2,0 1px 1px rgba(0,0,0,.12);text-align:center;line-height:19px;font-size:13.4px">New Folder</div>
<div class="d" style="left:742px;top:629.5px;width:76.5px;height:20px;border-radius:5px;background:#fff;box-shadow:0 0 0 0.5px #c2c2c2,0 1px 1px rgba(0,0,0,.12);text-align:center;line-height:19px;font-size:13.4px">Cancel</div>
<div class="d" style="left:827px;top:629px;width:78px;height:20.5px;border-radius:5px;background:linear-gradient(#4e97f8,#2f80f5);box-shadow:0 0 0 0.5px #2a72dc;text-align:center;line-height:22px;font-size:13.4px;color:#fff;-webkit-text-stroke:0.3px #fff">Save</div>
</div></div>
</body></html>
